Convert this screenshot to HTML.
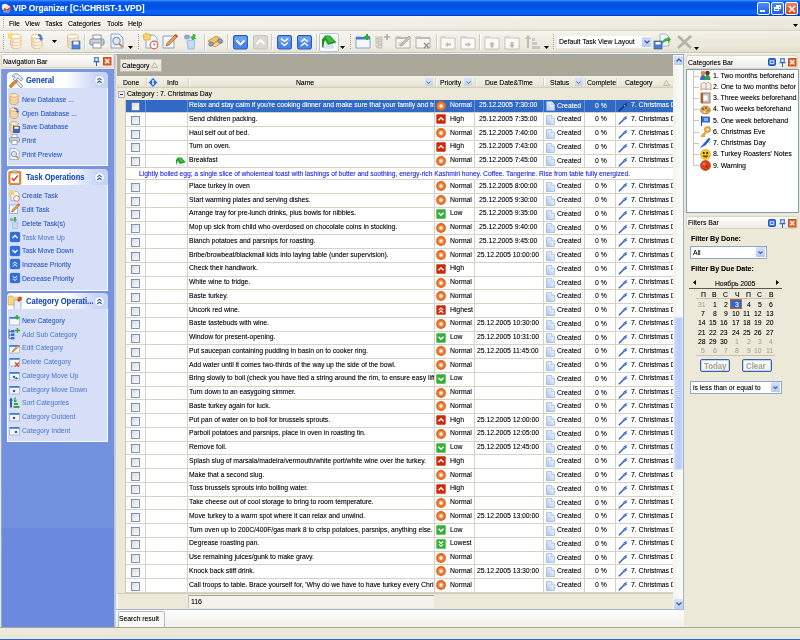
<!DOCTYPE html><html><head><meta charset="utf-8"><style>
*{margin:0;padding:0;box-sizing:border-box}
html,body{width:800px;height:640px;overflow:hidden;background:#ECE9D8;font-family:"Liberation Sans",sans-serif}
.b{position:absolute}
.t{position:absolute;white-space:nowrap;line-height:1;transform-origin:0 0}
svg{position:absolute;overflow:visible}
</style></head><body><div id="root" style="position:absolute;left:0;top:0;width:800px;height:640px;will-change:transform"><div class="b" style="left:0px;top:0px;width:800px;height:16px;background:linear-gradient(#4A96FF 0,#2A7AFF 1px,#0858F2 2px,#0352E4 4px,#0352E2 9px,#0862F6 10px,#0A64F8 14px,#0246D0 15px,#0038B8 16px)"></div>
<div class="t" style="left:13px;top:4.0px;font-size:9px;color:#fff;font-weight:bold;text-shadow:.3px 0 0 rgba(255,255,255,0.27999999999999997);transform:scaleX(0.93);">VIP Organizer [C:\CHRIST-1.VPD]</div>
<svg style="left:1px;top:3px" width="11" height="10" viewBox="0 0 11 10"><circle cx="4" cy="4" r="3.2" fill="#F4F0EA"/><circle cx="7" cy="5" r="2.6" fill="#E8E4DC"/><path d="M3 5.5l3 2 4-3" stroke="#E03A1A" stroke-width="1.6" fill="none"/><ellipse cx="5.5" cy="8.5" rx="3.5" ry="1.3" fill="#8A9AB8"/></svg>
<div class="b" style="left:757px;top:1.5px;width:13px;height:13px;background:linear-gradient(#4C8CFF,#1F5FE8);border:1px solid #fff;border-radius:2px"></div>
<div class="b" style="left:771px;top:1.5px;width:13px;height:13px;background:linear-gradient(#4C8CFF,#1F5FE8);border:1px solid #fff;border-radius:2px"></div>
<div class="b" style="left:785px;top:1.5px;width:13px;height:13px;background:linear-gradient(#E9845C,#D24A1E);border:1px solid #fff;border-radius:2px"></div>
<div class="b" style="left:760px;top:9.5px;width:5px;height:2px;background:#fff"></div>
<div class="b" style="left:776px;top:5px;width:5px;height:4px;border:1px solid #fff;border-top-width:2px"></div>
<div class="b" style="left:774px;top:7px;width:5px;height:4px;border:1px solid #fff;border-top-width:2px;background:#2A66EA"></div>
<svg style="left:788px;top:4.5px" width="8" height="8"><path d="M1 1L7 7M7 1L1 7" stroke="#fff" stroke-width="1.6"/></svg>
<div class="b" style="left:0px;top:16px;width:800px;height:15px;background:linear-gradient(rgba(255,255,255,.35),rgba(255,255,255,0) 40%,rgba(0,0,0,0) 80%,rgba(80,70,30,.06)),linear-gradient(90deg,#F3F2EC,#F1EFE5 50%,#ECE9DC);border-bottom:1px solid #D8D5C8"></div>
<div class="b" style="left:3px;top:19px;width:1px;height:1px;background:#A8A597"></div>
<div class="b" style="left:3px;top:21px;width:1px;height:1px;background:#A8A597"></div>
<div class="b" style="left:3px;top:23px;width:1px;height:1px;background:#A8A597"></div>
<div class="b" style="left:3px;top:25px;width:1px;height:1px;background:#A8A597"></div>
<div class="b" style="left:3px;top:27px;width:1px;height:1px;background:#A8A597"></div>
<div class="t" style="left:9px;top:19.8px;font-size:7.5px;color:#000;text-shadow:.4px 0 0 rgba(0,0,0,0.35);transform:scaleX(0.9);">File</div>
<div class="t" style="left:25px;top:19.8px;font-size:7.5px;color:#000;text-shadow:.4px 0 0 rgba(0,0,0,0.35);transform:scaleX(0.9);">View</div>
<div class="t" style="left:45px;top:19.8px;font-size:7.5px;color:#000;text-shadow:.4px 0 0 rgba(0,0,0,0.35);transform:scaleX(0.9);">Tasks</div>
<div class="t" style="left:68px;top:19.8px;font-size:7.5px;color:#000;text-shadow:.4px 0 0 rgba(0,0,0,0.35);transform:scaleX(0.9);">Categories</div>
<div class="t" style="left:107px;top:19.8px;font-size:7.5px;color:#000;text-shadow:.4px 0 0 rgba(0,0,0,0.35);transform:scaleX(0.9);">Tools</div>
<div class="t" style="left:128px;top:19.8px;font-size:7.5px;color:#000;text-shadow:.4px 0 0 rgba(0,0,0,0.35);transform:scaleX(0.9);">Help</div>
<svg style="left:793px;top:24px" width="5" height="3"><path d="M0 0H5L2.5 3Z" fill="#000"/></svg>
<div class="b" style="left:0px;top:31px;width:800px;height:22px;background:linear-gradient(rgba(255,255,255,.45),rgba(255,255,255,0) 45%,rgba(0,0,0,0) 70%,rgba(90,80,40,.07)),linear-gradient(90deg,#F1F0EA,#EFEDE4 50%,#EBE8D9);border-bottom:1px solid #C9C6B6"></div>
<div class="b" style="left:0px;top:53px;width:800px;height:1px;background:#F4F3EE"></div>
<div class="b" style="left:3px;top:34px;width:1px;height:1px;background:#A8A597"></div>
<div class="b" style="left:3px;top:36px;width:1px;height:1px;background:#A8A597"></div>
<div class="b" style="left:3px;top:38px;width:1px;height:1px;background:#A8A597"></div>
<div class="b" style="left:3px;top:40px;width:1px;height:1px;background:#A8A597"></div>
<div class="b" style="left:3px;top:42px;width:1px;height:1px;background:#A8A597"></div>
<div class="b" style="left:3px;top:44px;width:1px;height:1px;background:#A8A597"></div>
<div class="b" style="left:3px;top:46px;width:1px;height:1px;background:#A8A597"></div>
<div class="b" style="left:3px;top:48px;width:1px;height:1px;background:#A8A597"></div>
<svg style="left:8px;top:33px" width="15" height="17" viewBox="0 0 15 17"><path d="M2.5 3.5v9.5c0 1.5 2.3 2.6 5.2 2.6s5.3-1.1 5.3-2.6V3.5" fill="#F7F1E6" stroke="#F0A850" stroke-width=".9" stroke-dasharray="1.2 .6"/><path d="M2.8 4v9c0 1.2 1.5 2 3 2.3V5.5C4 5.2 2.8 4.6 2.8 4z" fill="#DCD8D0" opacity=".7"/><ellipse cx="7.75" cy="3.5" rx="5.2" ry="2.3" fill="#FFFCF4" stroke="#F0B060" stroke-width=".8"/><path d="M2.5 7c0 1.4 2.3 2.4 5.2 2.4S13 8.4 13 7M2.5 10.2c0 1.4 2.3 2.4 5.2 2.4s5.3-1 5.3-2.4" fill="none" stroke="#F2BE78" stroke-width=".7"/><path d="M0 1l2 2M3 0v3M0 4h3" stroke="#F9C700" stroke-width="1.3"/><circle cx="2" cy="3" r="2" fill="#FFE25A"/></svg>
<svg style="left:29px;top:33px" width="15" height="17" viewBox="0 0 15 17"><path d="M2.5 3.5v9.5c0 1.5 2.3 2.6 5.2 2.6s5.3-1.1 5.3-2.6V3.5" fill="#F7F1E6" stroke="#F0A850" stroke-width=".9" stroke-dasharray="1.2 .6"/><path d="M2.8 4v9c0 1.2 1.5 2 3 2.3V5.5C4 5.2 2.8 4.6 2.8 4z" fill="#DCD8D0" opacity=".7"/><ellipse cx="7.75" cy="3.5" rx="5.2" ry="2.3" fill="#FFFCF4" stroke="#F0B060" stroke-width=".8"/><path d="M2.5 7c0 1.4 2.3 2.4 5.2 2.4S13 8.4 13 7M2.5 10.2c0 1.4 2.3 2.4 5.2 2.4s5.3-1 5.3-2.4" fill="none" stroke="#F2BE78" stroke-width=".7"/><path d="M9 1c3 0 4 2 4 4l1.5 0-2.5 3-2.5-3h1.5c0-1-1-2-2-2z" fill="#3C7DE0"/></svg>
<svg style="left:52px;top:40px" width="5" height="3" viewBox="0 0 5 3"><path d="M0 0H5L2.5 3Z" fill="#000"/></svg>
<svg style="left:65px;top:33px" width="15" height="17" viewBox="0 0 15 17"><path d="M2.5 3.5v9.5c0 1.5 2.3 2.6 5.2 2.6s5.3-1.1 5.3-2.6V3.5" fill="#F7F1E6" stroke="#F0A850" stroke-width=".9" stroke-dasharray="1.2 .6"/><path d="M2.8 4v9c0 1.2 1.5 2 3 2.3V5.5C4 5.2 2.8 4.6 2.8 4z" fill="#DCD8D0" opacity=".7"/><ellipse cx="7.75" cy="3.5" rx="5.2" ry="2.3" fill="#FFFCF4" stroke="#F0B060" stroke-width=".8"/><path d="M2.5 7c0 1.4 2.3 2.4 5.2 2.4S13 8.4 13 7M2.5 10.2c0 1.4 2.3 2.4 5.2 2.4s5.3-1 5.3-2.4" fill="none" stroke="#F2BE78" stroke-width=".7"/><rect x="7" y="8" width="8" height="8" fill="#5A84D4" stroke="#2E5AA8" stroke-width=".6"/><rect x="8.5" y="8.5" width="5" height="3" fill="#fff"/></svg>
<div class="b" style="left:84px;top:34px;width:1px;height:16px;background:#CFCCBF;box-shadow:1px 0 0 #fff"></div>
<svg style="left:89px;top:34px" width="16" height="15" viewBox="0 0 16 15"><rect x="4" y="1" width="8" height="5" fill="#fff" stroke="#8A94A2"/><rect x="1" y="5" width="14" height="6" rx="1.5" fill="#C9D0DA" stroke="#7E8896"/><rect x="4" y="9" width="8" height="5" fill="#fff" stroke="#8A94A2"/><circle cx="12.5" cy="7" r=".8" fill="#3BB33B"/></svg>
<svg style="left:110px;top:33px" width="16" height="16" viewBox="0 0 16 16"><path d="M1 1h8l4 4v10H1z" fill="#F2F5FB" stroke="#8EA0BC"/><circle cx="6.5" cy="8" r="3.6" fill="#DCE8F8" stroke="#7F98BC" stroke-width="1.2"/><path d="M9 10.5l3.5 3.5" stroke="#D08A3A" stroke-width="2"/></svg>
<svg style="left:128px;top:46px" width="5" height="3" viewBox="0 0 5 3"><path d="M0 0H5L2.5 3Z" fill="#000"/></svg>
<div class="b" style="left:138px;top:34px;width:1px;height:1px;background:#A8A597"></div>
<div class="b" style="left:138px;top:36px;width:1px;height:1px;background:#A8A597"></div>
<div class="b" style="left:138px;top:38px;width:1px;height:1px;background:#A8A597"></div>
<div class="b" style="left:138px;top:40px;width:1px;height:1px;background:#A8A597"></div>
<div class="b" style="left:138px;top:42px;width:1px;height:1px;background:#A8A597"></div>
<div class="b" style="left:138px;top:44px;width:1px;height:1px;background:#A8A597"></div>
<div class="b" style="left:138px;top:46px;width:1px;height:1px;background:#A8A597"></div>
<div class="b" style="left:138px;top:48px;width:1px;height:1px;background:#A8A597"></div>
<svg style="left:143px;top:33px" width="16" height="17" viewBox="0 0 16 17"><path d="M3 2h8l3 3v10H3z" fill="#F3F6FB" stroke="#9AA7BC"/><path d="M0 2l3-2 5 2-1 5-6 0z" fill="#F6D36A" stroke="#D8A030" stroke-width=".6"/><circle cx="11" cy="12" r="3.8" fill="#fff" stroke="#D06A4A" stroke-width="1.2"/><path d="M11 10v2h1.5" stroke="#555" stroke-width=".7" fill="none"/></svg>
<svg style="left:162px;top:33px" width="16" height="16" viewBox="0 0 16 16"><path d="M1 3h11v12H1z" fill="#F3F6FB" stroke="#8EA0BC"/><path d="M4 13l1-3 8-8 2 2-8 8z" fill="#F0A040" stroke="#7A5A3A" stroke-width=".6"/><path d="M12 2l2-1 2 2-1 2z" fill="#E04A2A"/></svg>
<svg style="left:183px;top:33px" width="17" height="17" viewBox="0 0 17 17"><ellipse cx="4" cy="4" rx="3" ry="2.5" fill="#8FA8D8"/><path d="M9 1v3l-2 0 3.5 3.5L14 4h-2V1z" fill="#48B048" transform="rotate(20 10 4)"/><path d="M4 8c0-1 8-1 8 0l-1 8H5z" fill="#C6DAF6" stroke="#8AB0E6" stroke-width=".8"/></svg>
<div class="b" style="left:204px;top:34px;width:1px;height:16px;background:#CFCCBF;box-shadow:1px 0 0 #fff"></div>
<svg style="left:207px;top:35px" width="17" height="13" viewBox="0 0 17 13"><path d="M1 6l8-5 4 2-7 6z" fill="#F2C670" stroke="#C8882C" stroke-width=".8"/><path d="M5 10l9-6 2 3-8 5z" fill="#F6D890" stroke="#C8882C" stroke-width=".8"/><circle cx="4" cy="9" r="2.3" fill="#8E9EC0" stroke="#5A6A8A" stroke-width=".6"/><circle cx="13" cy="6" r="2.3" fill="#8E9EC0" stroke="#5A6A8A" stroke-width=".6"/></svg>
<div class="b" style="left:227px;top:34px;width:1px;height:16px;background:#CFCCBF;box-shadow:1px 0 0 #fff"></div>
<svg style="left:232.5px;top:34.5px" width="15" height="15" viewBox="0 0 15 15"><rect x=".5" y=".5" width="14" height="13.5" rx="1.5" fill="#4A86E8" stroke="#2A5CB8"/><rect x="1.5" y="1.5" width="12" height="5" rx="1" fill="#8BB6F6" opacity=".6"/><path d="M3.5 5.5l4 4 4-4" stroke="#fff" stroke-width="1.8" fill="none"/></svg>
<svg style="left:252.5px;top:34.5px" width="15" height="15" viewBox="0 0 15 15"><rect x=".5" y=".5" width="14" height="13.5" rx="1.5" fill="#D9D8D2" stroke="#C4C3BC"/><path d="M3.5 9l4-4 4 4" stroke="#fff" stroke-width="1.8" fill="none"/></svg>
<div class="b" style="left:271px;top:34px;width:1px;height:16px;background:#CFCCBF;box-shadow:1px 0 0 #fff"></div>
<svg style="left:276.5px;top:34.5px" width="15" height="15" viewBox="0 0 15 15"><rect x=".5" y=".5" width="14" height="13.5" rx="1.5" fill="#4A86E8" stroke="#2A5CB8"/><rect x="1.5" y="1.5" width="12" height="5" rx="1" fill="#8BB6F6" opacity=".6"/><path d="M4 3.5l3.5 3 3.5-3M4 7.5l3.5 3 3.5-3" stroke="#fff" stroke-width="1.5" fill="none"/></svg>
<svg style="left:296.5px;top:34.5px" width="15" height="15" viewBox="0 0 15 15"><rect x=".5" y=".5" width="14" height="13.5" rx="1.5" fill="#4A86E8" stroke="#2A5CB8"/><rect x="1.5" y="1.5" width="12" height="5" rx="1" fill="#8BB6F6" opacity=".6"/><path d="M4 7l3.5-3 3.5 3M4 11l3.5-3 3.5 3" stroke="#fff" stroke-width="1.5" fill="none"/></svg>
<div class="b" style="left:316px;top:34px;width:1px;height:16px;background:#CFCCBF;box-shadow:1px 0 0 #fff"></div>
<div class="b" style="left:318.5px;top:32.5px;width:20px;height:19px;background:#FBFBF9;border:1px solid #B9C6DE;border-radius:2px"></div>
<svg style="left:321px;top:34px" width="17" height="16" viewBox="0 0 17 16"><path d="M3 6h8l1 8H3z" fill="#F4F7FC" stroke="#B8C8E4" stroke-width=".7"/><path d="M5 12h6M5 10h5" stroke="#A8BEE8" stroke-width=".8"/><path d="M1.5 13.5V5L4 1.5h5l6.5 7-2.5.7-6 1.6L4 6z" fill="#1E9A1E"/><path d="M4.5 2.5h4l4.5 5-5 1.5z" fill="#3CC03C"/><path d="M1.8 13.5V5" stroke="#0E7A0E" stroke-width="1.2"/></svg>
<svg style="left:340px;top:46px" width="5" height="3" viewBox="0 0 5 3"><path d="M0 0H5L2.5 3Z" fill="#000"/></svg>
<div class="b" style="left:350px;top:34px;width:1px;height:1px;background:#A8A597"></div>
<div class="b" style="left:350px;top:36px;width:1px;height:1px;background:#A8A597"></div>
<div class="b" style="left:350px;top:38px;width:1px;height:1px;background:#A8A597"></div>
<div class="b" style="left:350px;top:40px;width:1px;height:1px;background:#A8A597"></div>
<div class="b" style="left:350px;top:42px;width:1px;height:1px;background:#A8A597"></div>
<div class="b" style="left:350px;top:44px;width:1px;height:1px;background:#A8A597"></div>
<div class="b" style="left:350px;top:46px;width:1px;height:1px;background:#A8A597"></div>
<div class="b" style="left:350px;top:48px;width:1px;height:1px;background:#A8A597"></div>
<svg style="left:355px;top:34px" width="16" height="15" viewBox="0 0 16 15"><path d="M1 3h5l1 1h8v10H1z" fill="#F4F7FC" stroke="#7A92B8" stroke-width=".8"/><rect x="1" y="3" width="14" height="2.5" fill="#3D7DDA"/><path d="M12 0v6M9 3h6" stroke="#2FAA2F" stroke-width="2"/></svg>
<svg style="left:375px;top:34px" width="16" height="16" viewBox="0 0 16 16"><rect x="3" y="3" width="4" height="3" fill="#E0DED6" stroke="#B0AEA6" stroke-width=".7"/><rect x="3" y="7" width="4" height="3" fill="#E0DED6" stroke="#B0AEA6" stroke-width=".7"/><rect x="3" y="11" width="4" height="3" fill="#E0DED6" stroke="#B0AEA6" stroke-width=".7"/><path d="M1 2v11h2M1 8h2M1 4.5h2" stroke="#B0AEA6" stroke-width=".7" fill="none"/><path d="M12 0v6M9 3h6" stroke="#AFADA5" stroke-width="1.6"/></svg>
<svg style="left:395px;top:34px" width="16" height="16" viewBox="0 0 16 16"><path d="M1 3h5l1 1h8v10H1z" fill="#F6F5F1" stroke="#A3A199" stroke-width=".8"/><rect x="1" y="3" width="14" height="2" fill="#BEBCB4"/><path d="M5 12l1-2 8-8 1.5 1.5-8 8z" fill="#C8C6BE" stroke="#8E8C84" stroke-width=".6"/><path d="M3 9h6M3 11h4" stroke="#A3A199" stroke-width=".6"/></svg>
<svg style="left:415px;top:34px" width="16" height="16" viewBox="0 0 16 16"><path d="M1 3h5l1 1h8v10H1z" fill="#F6F5F1" stroke="#A3A199" stroke-width=".8"/><rect x="1" y="3" width="14" height="2" fill="#BEBCB4"/><path d="M9 9l5 5M14 9l-5 5" stroke="#8E8C84" stroke-width="1.3"/></svg>
<div class="b" style="left:436px;top:34px;width:1px;height:16px;background:#CFCCBF;box-shadow:1px 0 0 #fff"></div>
<svg style="left:440px;top:35px" width="16" height="15" viewBox="0 0 16 15"><path d="M1 2h5l1 1h8v11H1z" fill="#FAFAF8" stroke="#B7B5AD" stroke-width=".8"/><rect x="1" y="2" width="6" height="1.5" fill="#D4D2CA"/><path d="M5 9.5l3-2.5v1.5h3v2H8v1.5z" fill="#BDBBB3"/></svg>
<svg style="left:460px;top:35px" width="16" height="15" viewBox="0 0 16 15"><path d="M1 2h5l1 1h8v11H1z" fill="#FAFAF8" stroke="#B7B5AD" stroke-width=".8"/><rect x="1" y="2" width="6" height="1.5" fill="#D4D2CA"/><path d="M11 9.5l-3-2.5v1.5H5v2h3v1.5z" fill="#BDBBB3"/></svg>
<div class="b" style="left:479px;top:34px;width:1px;height:16px;background:#CFCCBF;box-shadow:1px 0 0 #fff"></div>
<svg style="left:484px;top:35px" width="16" height="15" viewBox="0 0 16 15"><path d="M1 2h5l1 1h8v11H1z" fill="#FAFAF8" stroke="#B7B5AD" stroke-width=".8"/><rect x="1" y="2" width="6" height="1.5" fill="#D4D2CA"/><path d="M8 6.5l3 3H9.5v3h-3v-3H5z" fill="#BDBBB3"/></svg>
<svg style="left:504px;top:35px" width="16" height="15" viewBox="0 0 16 15"><path d="M1 2h5l1 1h8v11H1z" fill="#FAFAF8" stroke="#B7B5AD" stroke-width=".8"/><rect x="1" y="2" width="6" height="1.5" fill="#D4D2CA"/><path d="M8 13l3-3H9.5V7h-3v3H5z" fill="#BDBBB3"/></svg>
<svg style="left:525px;top:34px" width="16" height="16" viewBox="0 0 16 16"><path d="M3 1l3 4H4v9H2V5H0z" fill="#BDBBB3"/><rect x="7" y="4" width="3" height="3" fill="#C9C7BF"/><rect x="7" y="8" width="5" height="3" fill="#C9C7BF"/><rect x="7" y="12" width="8" height="3" fill="#C9C7BF"/></svg>
<svg style="left:544px;top:46px" width="5" height="3" viewBox="0 0 5 3"><path d="M0 0H5L2.5 3Z" fill="#000"/></svg>
<div class="b" style="left:553px;top:34px;width:1px;height:1px;background:#A8A597"></div>
<div class="b" style="left:553px;top:36px;width:1px;height:1px;background:#A8A597"></div>
<div class="b" style="left:553px;top:38px;width:1px;height:1px;background:#A8A597"></div>
<div class="b" style="left:553px;top:40px;width:1px;height:1px;background:#A8A597"></div>
<div class="b" style="left:553px;top:42px;width:1px;height:1px;background:#A8A597"></div>
<div class="b" style="left:553px;top:44px;width:1px;height:1px;background:#A8A597"></div>
<div class="b" style="left:553px;top:46px;width:1px;height:1px;background:#A8A597"></div>
<div class="b" style="left:553px;top:48px;width:1px;height:1px;background:#A8A597"></div>
<div class="b" style="left:557px;top:36px;width:94px;height:11.5px;background:#fff"></div>
<div class="t" style="left:558.5px;top:38.2px;font-size:7.5px;color:#000;text-shadow:.4px 0 0 rgba(0,0,0,0.35);transform:scaleX(0.9);">Default Task View Layout</div>
<div class="b" style="left:642px;top:36.5px;width:8.5px;height:10.5px;background:linear-gradient(#CCDAFB,#B8CCF6);border-radius:1px"></div>
<svg style="left:643.5px;top:40px" width="6" height="4" viewBox="0 0 6 4"><path d="M.6 .6L3 3 5.4 .6" stroke="#3A4A70" stroke-width="1.2" fill="none"/></svg>
<svg style="left:653px;top:33px" width="18" height="17" viewBox="0 0 18 17"><path d="M7 1h6l3 3v9H7z" fill="#F2F5FB" stroke="#9AA7BC" stroke-width=".8"/><path d="M9 11c0-4 3-6 6-6v-2l3 3.5-3 3.5V8c-2 0-4 1-6 3z" fill="#40B040"/><rect x="1" y="8" width="8" height="8" fill="#4E7ACC" stroke="#2C4E94" stroke-width=".6"/><rect x="2.5" y="9" width="5" height="2.5" fill="#fff"/></svg>
<svg style="left:676px;top:34px" width="17" height="16" viewBox="0 0 17 16"><path d="M2 2l13 12M15 2L2 14" stroke="#B4B2AA" stroke-width="2.6"/></svg>
<svg style="left:694px;top:47px" width="5" height="3" viewBox="0 0 5 3"><path d="M0 0H5L2.5 3Z" fill="#000"/></svg>
<div class="b" style="left:1px;top:54px;width:112.5px;height:14px;background:linear-gradient(#FDFDFB,#F4F3EE 60%,#ECEAE1);border:1px solid #D9D6C9;border-radius:3px"></div>
<div class="t" style="left:3px;top:58px;font-size:7.5px;color:#000;text-shadow:.4px 0 0 rgba(0,0,0,0.35);transform:scaleX(0.9);">Navigation Bar</div>
<svg style="left:93.0px;top:56.5px" width="7" height="9" viewBox="0 0 7 9"><path d="M1 .8h5M1.8 .8v3.6h3.4V.8M.3 4.8h6.4M3.5 4.8V9" stroke="#2C5FBE" stroke-width="1" fill="none"/></svg>
<svg style="left:103.0px;top:56.5px" width="8.5" height="8.5" viewBox="0 0 8.5 8.5"><rect x=".5" y=".5" width="7.5" height="7.5" fill="#E66A30" stroke="#C8501C"/><path d="M2.3 2.3l3.9 3.9M6.2 2.3l-3.9 3.9" stroke="#fff" stroke-width="1.3"/></svg>
<div class="b" style="left:1px;top:69px;width:113px;height:557.5px;background:linear-gradient(#7A96E0 0,#7694E0 150px,#7191DE 459px,#6A8ADF 459px,#6889DE 100%);border-left:1px solid #8CA6E6"></div>
<div class="b" style="left:7px;top:71.5px;width:101px;height:16px;background:linear-gradient(90deg,#FFFFFF 0,#FFFFFF 58%,#E2E9FA 74%,#CAD6F7 88%,#C6D3F7 100%);border-radius:4px 4px 0 0"></div>
<div class="t" style="left:25.5px;top:76.7px;font-size:8.2px;color:#1A4DB8;font-weight:bold;text-shadow:.3px 0 0 rgba(26,77,184,0.27999999999999997);transform:scaleX(0.92);">General</div>
<svg style="left:94px;top:74.5px" width="11" height="11" viewBox="0 0 11 11"><circle cx="5.5" cy="5.5" r="4.8" fill="#fff" stroke="#B8C6EA" stroke-width=".8"/><path d="M3.3 5.2l2.2-2 2.2 2M3.3 8l2.2-2 2.2 2" stroke="#2A54B4" stroke-width="1.1" fill="none"/></svg>
<svg style="left:8px;top:72.5px" width="16" height="15" viewBox="0 0 16 15"><path d="M1 13l7-7 2 2-7 7z" fill="#E8862A" stroke="#8A5020" stroke-width=".5"/><path d="M4 3c2-3 6-3 8 0l3 3-2 2-3-3-3 3-2-2 2-2z" fill="#E2E8F2" stroke="#6A7A92" stroke-width=".7"/><path d="M10 8l5 5-2 2-5-5z" fill="#DDE4EF" stroke="#6A7A92" stroke-width=".6"/></svg>
<div class="b" style="left:7px;top:87.5px;width:101px;height:78.0px;background:#D6DFF7;border:1px solid #fff;border-top:0"></div>
<div class="t" style="left:22px;top:96.0px;font-size:7.5px;color:#2F5CC4;text-shadow:.4px 0 0 rgba(47,92,196,0.35);transform:scaleX(0.9);">New Database ...</div>
<svg style="left:9px;top:93.2px" width="10" height="12" viewBox="0 0 10 12"><path d="M1 2.5v7c0 1 1.8 2 4 2s4-1 4-2v-7" fill="#F3E2C0" stroke="#E0943A" stroke-width=".8"/><ellipse cx="5" cy="2.5" rx="4" ry="1.8" fill="#FFF4DC" stroke="#E0943A" stroke-width=".8"/><path d="M1 5.5c0 1 1.8 1.7 4 1.7s4-.7 4-1.7M1 8c0 1 1.8 1.7 4 1.7S9 9 9 8" fill="none" stroke="#E8B060" stroke-width=".6"/></svg>
<div class="t" style="left:22px;top:109.6px;font-size:7.5px;color:#2F5CC4;text-shadow:.4px 0 0 rgba(47,92,196,0.35);transform:scaleX(0.9);">Open Database ...</div>
<svg style="left:9px;top:106.8px" width="10" height="12" viewBox="0 0 10 12"><path d="M1 2.5v7c0 1 1.8 2 4 2s4-1 4-2v-7" fill="#F3E2C0" stroke="#E0943A" stroke-width=".8"/><ellipse cx="5" cy="2.5" rx="4" ry="1.8" fill="#FFF4DC" stroke="#E0943A" stroke-width=".8"/><path d="M1 5.5c0 1 1.8 1.7 4 1.7s4-.7 4-1.7M1 8c0 1 1.8 1.7 4 1.7S9 9 9 8" fill="none" stroke="#E8B060" stroke-width=".6"/></svg>
<svg style="left:14px;top:106.8px" width="6" height="6" viewBox="0 0 6 6"><path d="M0 1c3 0 4 1 4 3h1.5L3.5 6 1.5 4H3C3 3 2 2 0 2z" fill="#2D6FD8"/></svg>
<div class="t" style="left:22px;top:123.3px;font-size:7.5px;color:#2F5CC4;text-shadow:.4px 0 0 rgba(47,92,196,0.35);transform:scaleX(0.9);">Save Database</div>
<svg style="left:9px;top:120.5px" width="10" height="12" viewBox="0 0 10 12"><path d="M1 2.5v7c0 1 1.8 2 4 2s4-1 4-2v-7" fill="#F3E2C0" stroke="#E0943A" stroke-width=".8"/><ellipse cx="5" cy="2.5" rx="4" ry="1.8" fill="#FFF4DC" stroke="#E0943A" stroke-width=".8"/><path d="M1 5.5c0 1 1.8 1.7 4 1.7s4-.7 4-1.7M1 8c0 1 1.8 1.7 4 1.7S9 9 9 8" fill="none" stroke="#E8B060" stroke-width=".6"/></svg>
<svg style="left:13px;top:125.5px" width="7" height="7" viewBox="0 0 7 7"><rect x=".3" y=".3" width="6.4" height="6.4" fill="#3E68B8" stroke="#1D3D80" stroke-width=".5"/><rect x="1.5" y=".8" width="4" height="2" fill="#fff"/></svg>
<div class="t" style="left:22px;top:136.9px;font-size:7.5px;color:#2F5CC4;text-shadow:.4px 0 0 rgba(47,92,196,0.35);transform:scaleX(0.9);">Print</div>
<svg style="left:9px;top:134.1px" width="11" height="11" viewBox="0 0 11 11"><rect x="3" y=".5" width="5" height="3.5" fill="#fff" stroke="#8A94A2" stroke-width=".7"/><rect x=".5" y="3.5" width="10" height="4.5" rx="1" fill="#C6CDD8" stroke="#7E8896" stroke-width=".7"/><rect x="3" y="6.5" width="5" height="4" fill="#fff" stroke="#8A94A2" stroke-width=".7"/></svg>
<div class="t" style="left:22px;top:150.60000000000002px;font-size:7.5px;color:#2F5CC4;text-shadow:.4px 0 0 rgba(47,92,196,0.35);transform:scaleX(0.9);">Print Preview</div>
<svg style="left:9px;top:147.8px" width="11" height="12" viewBox="0 0 11 12"><path d="M1 .5h6l3 3v8H1z" fill="#F2F5FB" stroke="#8EA0BC" stroke-width=".7"/><circle cx="5" cy="6" r="2.6" fill="#DCE8F8" stroke="#7F98BC" stroke-width=".9"/><path d="M6.8 7.8l2.7 2.7" stroke="#D08A3A" stroke-width="1.5"/></svg>
<div class="b" style="left:7px;top:168.5px;width:101px;height:16px;background:linear-gradient(90deg,#FFFFFF 0,#FFFFFF 58%,#E2E9FA 74%,#CAD6F7 88%,#C6D3F7 100%);border-radius:4px 4px 0 0"></div>
<div class="t" style="left:25.5px;top:173.7px;font-size:8.2px;color:#1A4DB8;font-weight:bold;text-shadow:.3px 0 0 rgba(26,77,184,0.27999999999999997);transform:scaleX(0.92);">Task Operations</div>
<svg style="left:94px;top:171.5px" width="11" height="11" viewBox="0 0 11 11"><circle cx="5.5" cy="5.5" r="4.8" fill="#fff" stroke="#B8C6EA" stroke-width=".8"/><path d="M3.3 5.2l2.2-2 2.2 2M3.3 8l2.2-2 2.2 2" stroke="#2A54B4" stroke-width="1.1" fill="none"/></svg>
<svg style="left:8px;top:169.5px" width="14" height="15" viewBox="0 0 14 15"><rect x=".8" y="1.5" width="12" height="13" rx="1" fill="#F08A2A" stroke="#B05A10" stroke-width=".6"/><rect x="2.5" y="3.5" width="8.5" height="9.5" fill="#fff"/><rect x="4.5" y=".3" width="4.5" height="2.4" rx=".6" fill="#C7C1B0" stroke="#8A8478" stroke-width=".4"/><path d="M3.8 8l2 2.5 4-5" stroke="#D8341A" stroke-width="1.3" fill="none"/></svg>
<div class="b" style="left:7px;top:184.5px;width:101px;height:106.30000000000001px;background:#D6DFF7;border:1px solid #fff;border-top:0"></div>
<div class="t" style="left:22px;top:192.4px;font-size:7.5px;color:#2F5CC4;text-shadow:.4px 0 0 rgba(47,92,196,0.35);transform:scaleX(0.9);">Create Task</div>
<svg style="left:9px;top:189.6px" width="11" height="12" viewBox="0 0 11 12"><path d="M2 1.5h6l2 2v7H2z" fill="#F3F6FB" stroke="#9AA7BC" stroke-width=".7"/><path d="M0 1.5l2-1.5 4 1.5-1 3.5H0z" fill="#F6D36A"/><circle cx="7.5" cy="8.5" r="2.8" fill="#fff" stroke="#D06A4A" stroke-width=".9"/></svg>
<div class="t" style="left:22px;top:206.10000000000002px;font-size:7.5px;color:#2F5CC4;text-shadow:.4px 0 0 rgba(47,92,196,0.35);transform:scaleX(0.9);">Edit Task</div>
<svg style="left:9px;top:203.3px" width="11" height="11" viewBox="0 0 11 11"><path d="M.5 2h8v8.5h-8z" fill="#F3F6FB" stroke="#8EA0BC" stroke-width=".7"/><path d="M2.5 9l.8-2.2 5.5-5.5 1.4 1.4-5.5 5.5z" fill="#F0A040" stroke="#7A5A3A" stroke-width=".5"/><path d="M8.5 1.3l1.2-1 1.2 1.2-1 1.2z" fill="#E04A2A"/></svg>
<div class="t" style="left:22px;top:219.8px;font-size:7.5px;color:#2F5CC4;text-shadow:.4px 0 0 rgba(47,92,196,0.35);transform:scaleX(0.9);">Delete Task(s)</div>
<svg style="left:9px;top:217.0px" width="12" height="12" viewBox="0 0 12 12"><ellipse cx="2.5" cy="2.5" rx="2" ry="1.8" fill="#8FA8D8"/><path d="M5 0v2.5h-1.5l2.5 2.5 2.5-2.5H7V0z" fill="#48B048"/><path d="M3 5.5c0-.7 6-.7 6 0l-.8 6H3.8z" fill="#C6DAF6" stroke="#8AB0E6" stroke-width=".6"/></svg>
<div class="t" style="left:22px;top:233.5px;font-size:7.5px;color:#5F83D2;text-shadow:.4px 0 0 rgba(95,131,210,0.35);transform:scaleX(0.9);">Task Move Up</div>
<svg style="left:9.5px;top:231.7px" width="10" height="10" viewBox="0 0 10 10"><rect x=".3" y=".3" width="9.4" height="9.4" rx="1" fill="#2C6FE0" stroke="#1B4FB4" stroke-width=".6"/><path d="M2.5 6l2.5-2.5L7.5 6" stroke="#fff" stroke-width="1.4" fill="none"/></svg>
<div class="t" style="left:22px;top:247.3px;font-size:7.5px;color:#2F5CC4;text-shadow:.4px 0 0 rgba(47,92,196,0.35);transform:scaleX(0.9);">Task Move Down</div>
<svg style="left:9.5px;top:245.5px" width="10" height="10" viewBox="0 0 10 10"><rect x=".3" y=".3" width="9.4" height="9.4" rx="1" fill="#2C6FE0" stroke="#1B4FB4" stroke-width=".6"/><path d="M2.5 4l2.5 2.5L7.5 4" stroke="#fff" stroke-width="1.4" fill="none"/></svg>
<div class="t" style="left:22px;top:261.1px;font-size:7.5px;color:#2F5CC4;text-shadow:.4px 0 0 rgba(47,92,196,0.35);transform:scaleX(0.9);">Increase Priority</div>
<svg style="left:9.5px;top:259.3px" width="10" height="10" viewBox="0 0 10 10"><rect x=".3" y=".3" width="9.4" height="9.4" rx="1" fill="#2C6FE0" stroke="#1B4FB4" stroke-width=".6"/><path d="M2.8 5l2.2-2 2.2 2M2.8 7.5l2.2-2 2.2 2" stroke="#fff" stroke-width="1" fill="none"/></svg>
<div class="t" style="left:22px;top:274.8px;font-size:7.5px;color:#2F5CC4;text-shadow:.4px 0 0 rgba(47,92,196,0.35);transform:scaleX(0.9);">Decrease Priority</div>
<svg style="left:9.5px;top:273.0px" width="10" height="10" viewBox="0 0 10 10"><rect x=".3" y=".3" width="9.4" height="9.4" rx="1" fill="#2C6FE0" stroke="#1B4FB4" stroke-width=".6"/><path d="M2.8 3l2.2 2 2.2-2M2.8 5.5l2.2 2 2.2-2" stroke="#fff" stroke-width="1" fill="none"/></svg>
<div class="b" style="left:7px;top:293px;width:101px;height:16px;background:linear-gradient(90deg,#FFFFFF 0,#FFFFFF 58%,#E2E9FA 74%,#CAD6F7 88%,#C6D3F7 100%);border-radius:4px 4px 0 0"></div>
<div class="t" style="left:25.5px;top:298.2px;font-size:8.2px;color:#1A4DB8;font-weight:bold;text-shadow:.3px 0 0 rgba(26,77,184,0.27999999999999997);transform:scaleX(0.92);">Category Operati...</div>
<svg style="left:94px;top:296px" width="11" height="11" viewBox="0 0 11 11"><circle cx="5.5" cy="5.5" r="4.8" fill="#fff" stroke="#B8C6EA" stroke-width=".8"/><path d="M3.3 5.2l2.2-2 2.2 2M3.3 8l2.2-2 2.2 2" stroke="#2A54B4" stroke-width="1.1" fill="none"/></svg>
<svg style="left:8px;top:294px" width="16" height="17" viewBox="0 0 16 17"><path d="M0 2h5l1 1.5h6V11H0z" fill="#F6D680" stroke="#D0A040" stroke-width=".6"/><rect x="6" y="6" width="7" height="10" fill="#E6ECF6" stroke="#7A8AA8" stroke-width=".6"/><path d="M9 6l3-3 2 2-3 3z" fill="#D8341A"/><circle cx="12" cy="4.5" r="2" fill="#E04A2A"/></svg>
<div class="b" style="left:7px;top:309px;width:101px;height:133px;background:#D6DFF7;border:1px solid #fff;border-top:0"></div>
<div class="t" style="left:22px;top:317.0px;font-size:7.5px;color:#2F5CC4;text-shadow:.4px 0 0 rgba(47,92,196,0.35);transform:scaleX(0.9);">New Category</div>
<svg style="left:9px;top:315.2px" width="11" height="11" viewBox="0 0 11 11"><path d="M.5 2.5h10v7.5H.5z" fill="#F4F7FC" stroke="#8AA0C0" stroke-width=".6"/><rect x=".5" y="2" width="10" height="1.8" fill="#3D7DDA"/><path d="M8 0v4.5M5.8 2.2h4.5" stroke="#2FAA2F" stroke-width="1.6"/></svg>
<div class="t" style="left:22px;top:330.7px;font-size:7.5px;color:#5F83D2;text-shadow:.4px 0 0 rgba(95,131,210,0.35);transform:scaleX(0.9);">Add Sub Category</div>
<svg style="left:9px;top:327.9px" width="11" height="12" viewBox="0 0 11 12"><rect x="2" y="2" width="3.5" height="2.5" fill="#3D6DC8"/><rect x="2" y="5.5" width="3.5" height="2.5" fill="#3D6DC8"/><rect x="2" y="9" width="3.5" height="2.5" fill="#3D6DC8"/><path d="M0 1v9.5h2M0 7h2M0 3.5h2" stroke="#2A4A90" stroke-width=".7" fill="none"/><path d="M8.5 0v5M6 2.5h5" stroke="#2FAA2F" stroke-width="1.5"/></svg>
<div class="t" style="left:22px;top:344.40000000000003px;font-size:7.5px;color:#5F83D2;text-shadow:.4px 0 0 rgba(95,131,210,0.35);transform:scaleX(0.9);">Edit Category</div>
<svg style="left:9px;top:342.6px" width="11" height="11" viewBox="0 0 11 11"><path d="M.5 2.5h10v7.5H.5z" fill="#F4F7FC" stroke="#8AA0C0" stroke-width=".6"/><rect x=".5" y="2" width="10" height="1.8" fill="#3D7DDA"/><path d="M3 9l1-2 5-5 1.2 1.2-5 5z" fill="#F0A040" stroke="#7A5A3A" stroke-width=".4"/></svg>
<div class="t" style="left:22px;top:358.1px;font-size:7.5px;color:#5F83D2;text-shadow:.4px 0 0 rgba(95,131,210,0.35);transform:scaleX(0.9);">Delete Category</div>
<svg style="left:9px;top:356.3px" width="11" height="11" viewBox="0 0 11 11"><path d="M.5 2.5h10v7.5H.5z" fill="#F4F7FC" stroke="#8AA0C0" stroke-width=".6"/><rect x=".5" y="2" width="10" height="1.8" fill="#3D7DDA"/><path d="M6 6.5l4 4M10 6.5l-4 4" stroke="#E04A10" stroke-width="1.4"/></svg>
<div class="t" style="left:22px;top:371.90000000000003px;font-size:7.5px;color:#5F83D2;text-shadow:.4px 0 0 rgba(95,131,210,0.35);transform:scaleX(0.9);">Category Move Up</div>
<svg style="left:9px;top:370.1px" width="11" height="11" viewBox="0 0 11 11"><path d="M.5 2.5h10v7.5H.5z" fill="#F4F7FC" stroke="#8AA0C0" stroke-width=".6"/><rect x=".5" y="2" width="10" height="1.8" fill="#3D7DDA"/><path d="M5.5 9l2-2 2 2z" fill="#2C5FBE"/><circle cx="5" cy="7" r="1.3" fill="#2C5FBE"/></svg>
<div class="t" style="left:22px;top:385.6px;font-size:7.5px;color:#5F83D2;text-shadow:.4px 0 0 rgba(95,131,210,0.35);transform:scaleX(0.9);">Category Move Down</div>
<svg style="left:9px;top:383.8px" width="11" height="11" viewBox="0 0 11 11"><path d="M.5 2.5h10v7.5H.5z" fill="#F4F7FC" stroke="#8AA0C0" stroke-width=".6"/><rect x=".5" y="2" width="10" height="1.8" fill="#3D7DDA"/><circle cx="5" cy="7" r="1.3" fill="#2C5FBE"/></svg>
<div class="t" style="left:22px;top:399.3px;font-size:7.5px;color:#5F83D2;text-shadow:.4px 0 0 rgba(95,131,210,0.35);transform:scaleX(0.9);">Sort Categories</div>
<svg style="left:9px;top:396.5px" width="11" height="11" viewBox="0 0 11 11"><path d="M2 .5l2 3H3v7H1v-7H0z" fill="#2C5FBE"/><path d="M5 3h2.5v2H5zM5 6h4v2H5zM4.5 9h6v2h-6z" fill="#38A838"/><path d="M6 0l1.5 2.5h-3z" fill="#38A838"/></svg>
<div class="t" style="left:22px;top:413.1px;font-size:7.5px;color:#5F83D2;text-shadow:.4px 0 0 rgba(95,131,210,0.35);transform:scaleX(0.9);">Category Outdent</div>
<svg style="left:9px;top:411.3px" width="11" height="11" viewBox="0 0 11 11"><path d="M.5 2.5h10v7.5H.5z" fill="#F4F7FC" stroke="#8AA0C0" stroke-width=".6"/><rect x=".5" y="2" width="10" height="1.8" fill="#3D7DDA"/><circle cx="5" cy="7" r="1.3" fill="#2C5FBE"/></svg>
<div class="t" style="left:22px;top:426.8px;font-size:7.5px;color:#5F83D2;text-shadow:.4px 0 0 rgba(95,131,210,0.35);transform:scaleX(0.9);">Category Indent</div>
<svg style="left:9px;top:425.0px" width="11" height="11" viewBox="0 0 11 11"><path d="M.5 2.5h10v7.5H.5z" fill="#F4F7FC" stroke="#8AA0C0" stroke-width=".6"/><rect x=".5" y="2" width="10" height="1.8" fill="#3D7DDA"/><circle cx="7" cy="7" r="1.3" fill="#2C5FBE"/></svg>
<div class="b" style="left:114px;top:54px;width:3px;height:573px;background:linear-gradient(90deg,#B4BFD4,#C9D0DC 50%,#E2E4E6)"></div>
<div class="b" style="left:115.5px;top:54px;width:569px;height:556px;border:1px solid #97A6C6;border-left:0;background:#ECE9D8"></div>
<div class="b" style="left:117px;top:55px;width:556.5px;height:21px;background:#ACA899"></div>
<div class="b" style="left:120px;top:59px;width:41.5px;height:12.5px;background:linear-gradient(#F3F2EA,#E6E3D6);border:1px solid #D2CFC2;border-right-color:#BEBBAE;border-bottom-color:#BEBBAE"></div>
<div class="t" style="left:122px;top:61.8px;font-size:7.5px;color:#000;text-shadow:.4px 0 0 rgba(0,0,0,0.35);transform:scaleX(0.9);">Category</div>
<svg style="left:151px;top:62px" width="7" height="6" viewBox="0 0 7 6"><path d="M3.5 .5L6.5 5.5H.5z" fill="none" stroke="#B8B2A0" stroke-width=".9"/></svg>
<div class="b" style="left:116.5px;top:76px;width:557px;height:12px;background:linear-gradient(#F2F1E8,#EBEADB 70%,#E2DFCF);border-bottom:1px solid #D2CEBE"></div>
<div class="t" style="left:123px;top:78.8px;font-size:7.5px;color:#000;text-shadow:.4px 0 0 rgba(0,0,0,0.35);transform:scaleX(0.9);">Done</div>
<div class="b" style="left:145.5px;top:78px;width:1px;height:8px;background:#D6D2C3;box-shadow:1px 0 0 #fff"></div>
<svg style="left:148px;top:76.5px" width="10" height="11" viewBox="0 0 10 11"><path d="M5 .5l4.5 5-4.5 5-4.5-5z" fill="#2D68D8" stroke="#CFE0FF" stroke-width=".8"/><rect x="4.3" y="3" width="1.4" height="5" fill="#fff"/></svg>
<div class="t" style="left:167px;top:78.8px;font-size:7.5px;color:#000;text-shadow:.4px 0 0 rgba(0,0,0,0.35);transform:scaleX(0.9);">Info</div>
<div class="b" style="left:187.5px;top:78px;width:1px;height:8px;background:#D6D2C3;box-shadow:1px 0 0 #fff"></div>
<div class="t" style="left:296px;top:78.8px;font-size:7.5px;color:#000;text-shadow:.4px 0 0 rgba(0,0,0,0.35);transform:scaleX(0.9);">Name</div>
<div class="b" style="left:424.5px;top:77.5px;width:8px;height:8px;background:linear-gradient(#DCE6FB,#C2D2F4);border-radius:1px"></div>
<svg style="left:426.0px;top:80.5px" width="5" height="3" viewBox="0 0 5 3"><path d="M.5 .5L2.5 2.5 4.5 .5" stroke="#4D6185" stroke-width="1" fill="none"/></svg>
<div class="b" style="left:434.5px;top:78px;width:1px;height:8px;background:#D6D2C3;box-shadow:1px 0 0 #fff"></div>
<div class="t" style="left:440px;top:78.8px;font-size:7.5px;color:#000;text-shadow:.4px 0 0 rgba(0,0,0,0.35);transform:scaleX(0.9);">Priority</div>
<div class="b" style="left:464px;top:77.5px;width:8px;height:8px;background:linear-gradient(#DCE6FB,#C2D2F4);border-radius:1px"></div>
<svg style="left:465.5px;top:80.5px" width="5" height="3" viewBox="0 0 5 3"><path d="M.5 .5L2.5 2.5 4.5 .5" stroke="#4D6185" stroke-width="1" fill="none"/></svg>
<div class="b" style="left:474.5px;top:78px;width:1px;height:8px;background:#D6D2C3;box-shadow:1px 0 0 #fff"></div>
<div class="t" style="left:485px;top:78.8px;font-size:7.5px;color:#000;text-shadow:.4px 0 0 rgba(0,0,0,0.35);transform:scaleX(0.9);">Due Date&amp;Time</div>
<div class="b" style="left:543px;top:78px;width:1px;height:8px;background:#D6D2C3;box-shadow:1px 0 0 #fff"></div>
<div class="t" style="left:550px;top:78.8px;font-size:7.5px;color:#000;text-shadow:.4px 0 0 rgba(0,0,0,0.35);transform:scaleX(0.9);">Status</div>
<div class="b" style="left:574.5px;top:77.5px;width:8px;height:8px;background:linear-gradient(#DCE6FB,#C2D2F4);border-radius:1px"></div>
<svg style="left:576.0px;top:80.5px" width="5" height="3" viewBox="0 0 5 3"><path d="M.5 .5L2.5 2.5 4.5 .5" stroke="#4D6185" stroke-width="1" fill="none"/></svg>
<div class="b" style="left:584.5px;top:78px;width:1px;height:8px;background:#D6D2C3;box-shadow:1px 0 0 #fff"></div>
<div class="t" style="left:587px;top:78.8px;font-size:7.5px;color:#000;text-shadow:.4px 0 0 rgba(0,0,0,0.35);transform:scaleX(0.9);">Complete</div>
<div class="b" style="left:615.5px;top:78px;width:1px;height:8px;background:#D6D2C3;box-shadow:1px 0 0 #fff"></div>
<div class="t" style="left:625px;top:78.8px;font-size:7.5px;color:#000;text-shadow:.4px 0 0 rgba(0,0,0,0.35);transform:scaleX(0.9);">Category</div>
<svg style="left:663px;top:80px" width="7" height="6" viewBox="0 0 7 6"><path d="M3.5 .5L6.5 5.5H.5z" fill="none" stroke="#B8B2A0" stroke-width=".9"/></svg>
<div class="b" style="left:116.5px;top:88px;width:557px;height:11px;background:#ECE9D8"></div>
<svg style="left:117.5px;top:90.5px" width="7" height="7" viewBox="0 0 7 7"><rect x=".5" y=".5" width="6" height="6" fill="#F4F3EE" stroke="#8FA0C0" stroke-width=".8"/><path d="M2 3.5h3" stroke="#000" stroke-width=".8"/></svg>
<div class="t" style="left:127px;top:90.3px;font-size:7.5px;color:#000;text-shadow:.4px 0 0 rgba(0,0,0,0.35);transform:scaleX(0.9);">Category : 7. Christmas Day</div>
<svg width="0" height="0" style="position:absolute"><defs><g id="pN"><circle cx="5" cy="5" r="4.9" fill="#E0601A"/><circle cx="5" cy="5" r="3.6" fill="#F0843A"/><circle cx="5" cy="5" r="1.7" fill="#fff"/></g><g id="pH"><rect x=".3" y=".3" width="9.4" height="9.4" rx="1" fill="#CC2A0A"/><path d="M2.5 6.3l2.5-2.5 2.5 2.5" stroke="#fff" stroke-width="1.5" fill="none"/></g><g id="pX"><rect x=".3" y=".3" width="9.4" height="9.4" rx="1" fill="#CC2A0A"/><path d="M2.8 5l2.2-2 2.2 2M2.8 7.8l2.2-2 2.2 2" stroke="#fff" stroke-width="1.1" fill="none"/></g><g id="pL"><rect x=".3" y=".3" width="9.4" height="9.4" rx="1" fill="#3AAE3A"/><path d="M2.5 3.8l2.5 2.5 2.5-2.5" stroke="#fff" stroke-width="1.5" fill="none"/></g><g id="pW"><rect x=".3" y=".3" width="9.4" height="9.4" rx="1" fill="#3AAE3A"/><path d="M2.8 2.5l2.2 2 2.2-2M2.8 5.3l2.2 2 2.2-2" stroke="#fff" stroke-width="1.1" fill="none"/></g><g id="doc"><linearGradient id="dg" x1="1" y1="0" x2="0" y2="1"><stop offset="0" stop-color="#FFFFFF"/><stop offset="1" stop-color="#A9C4EE"/></linearGradient><path d="M.5 .5h5l3 3v6H.5z" fill="url(#dg)" stroke="#98B2DA" stroke-width=".7"/><path d="M5.5 .5v3h3" fill="#E4EEFA" stroke="#98B2DA" stroke-width=".5"/></g><g id="pen"><path d="M.8 9.2L5.2 5" stroke="#2452C0" stroke-width="1.3"/><path d="M4.3 5.8L5.8 2.6 9.6 .6 8 2.8 9.4 3 6.4 5.2z" fill="#2E62D0"/><path d="M6 3.5l1.2-.5-.8 1.5z" fill="#D0E0FA"/></g><g id="cb"><rect x=".5" y=".5" width="8" height="8" fill="url(#cbg)" stroke="#5A7AB8" stroke-width=".8"/></g><linearGradient id="cbg" x1="0" y1="0" x2="1" y2="1"><stop offset="0" stop-color="#DCDAD0"/><stop offset="1" stop-color="#FDFDFB"/></linearGradient></defs></svg>
<div class="b" style="left:125.5px;top:99.5px;width:547px;height:13.75px;background:#316AC5;border-bottom:1px solid #D6D2C4"></div>
<div class="b" style="left:145px;top:99.5px;width:1px;height:12.75px;background:#6C90CE"></div>
<div class="b" style="left:187px;top:99.5px;width:1px;height:12.75px;background:#6C90CE"></div>
<div class="b" style="left:434px;top:99.5px;width:1px;height:12.75px;background:#6C90CE"></div>
<div class="b" style="left:474px;top:99.5px;width:1px;height:12.75px;background:#6C90CE"></div>
<div class="b" style="left:543px;top:99.5px;width:1px;height:12.75px;background:#6C90CE"></div>
<div class="b" style="left:584px;top:99.5px;width:1px;height:12.75px;background:#6C90CE"></div>
<div class="b" style="left:615px;top:99.5px;width:1px;height:12.75px;background:#6C90CE"></div>
<svg style="left:131px;top:102.1px" width="9" height="9"><use href="#cb"/></svg>
<div class="b" style="left:189px;top:99.5px;width:245px;height:12.75px;overflow:hidden">
<div class="t" style="left:0px;top:1.7px;font-size:7.5px;color:#fff;text-shadow:.4px 0 0 rgba(255,255,255,0.35);transform:scaleX(0.9);">Relax and stay calm if you're cooking dinner and make sure that your family and frie</div>
</div>
<svg style="left:436.3px;top:100.7px" width="10" height="10"><use href="#pN"/></svg>
<div class="t" style="left:449.5px;top:101.2px;font-size:7.5px;color:#fff;text-shadow:.4px 0 0 rgba(255,255,255,0.35);transform:scaleX(0.9);">Normal</div>
<div class="t" style="left:479px;top:101.2px;font-size:7.5px;color:#fff;text-shadow:.4px 0 0 rgba(255,255,255,0.35);transform:scaleX(0.9);">25.12.2005 7:30:00</div>
<svg style="left:545.8px;top:101.3px" width="10" height="11"><use href="#doc"/></svg>
<div class="t" style="left:557px;top:101.6px;font-size:7.5px;color:#fff;text-shadow:.4px 0 0 rgba(255,255,255,0.35);transform:scaleX(0.9);">Created</div>
<div class="t" style="left:595px;top:101.6px;font-size:7.5px;color:#fff;text-shadow:.4px 0 0 rgba(255,255,255,0.35);transform:scaleX(0.9);">0 %</div>
<svg style="left:617.5px;top:101.5px" width="10" height="10" viewBox="0 0 10 10"><path d="M.8 9.2L5.2 5" stroke="#0A2A7A" stroke-width="1.3"/><path d="M4.3 5.8L5.8 2.6 9.6 .6 8 2.8 9.4 3 6.4 5.2z" fill="#0A2A7A"/><path d="M6 3.5l1.5-.8-.8 2z" fill="#fff"/></svg>
<div class="t" style="left:631px;top:101.2px;font-size:7.5px;color:#fff;text-shadow:.4px 0 0 rgba(255,255,255,0.35);transform:scaleX(0.9);">7. Christmas D</div>
<div class="b" style="left:125.5px;top:113.25px;width:547px;height:13.75px;background:#fff;border-bottom:1px solid #D6D2C4"></div>
<div class="b" style="left:145px;top:113.25px;width:1px;height:12.75px;background:#D6D2C4"></div>
<div class="b" style="left:187px;top:113.25px;width:1px;height:12.75px;background:#D6D2C4"></div>
<div class="b" style="left:434px;top:113.25px;width:1px;height:12.75px;background:#D6D2C4"></div>
<div class="b" style="left:474px;top:113.25px;width:1px;height:12.75px;background:#D6D2C4"></div>
<div class="b" style="left:543px;top:113.25px;width:1px;height:12.75px;background:#D6D2C4"></div>
<div class="b" style="left:584px;top:113.25px;width:1px;height:12.75px;background:#D6D2C4"></div>
<div class="b" style="left:615px;top:113.25px;width:1px;height:12.75px;background:#D6D2C4"></div>
<svg style="left:131px;top:115.85px" width="9" height="9"><use href="#cb"/></svg>
<div class="b" style="left:189px;top:113.25px;width:245px;height:12.75px;overflow:hidden">
<div class="t" style="left:0px;top:1.7px;font-size:7.5px;color:#000;text-shadow:.4px 0 0 rgba(0,0,0,0.35);transform:scaleX(0.9);">Send children packing.</div>
</div>
<svg style="left:436.3px;top:114.45px" width="10" height="10"><use href="#pH"/></svg>
<div class="t" style="left:449.5px;top:114.95px;font-size:7.5px;color:#000;text-shadow:.4px 0 0 rgba(0,0,0,0.35);transform:scaleX(0.9);">High</div>
<div class="t" style="left:479px;top:114.95px;font-size:7.5px;color:#000;text-shadow:.4px 0 0 rgba(0,0,0,0.35);transform:scaleX(0.9);">25.12.2005 7:35:00</div>
<svg style="left:545.8px;top:115.05px" width="10" height="11"><use href="#doc"/></svg>
<div class="t" style="left:557px;top:115.35px;font-size:7.5px;color:#000;text-shadow:.4px 0 0 rgba(0,0,0,0.35);transform:scaleX(0.9);">Created</div>
<div class="t" style="left:595px;top:115.35px;font-size:7.5px;color:#000;text-shadow:.4px 0 0 rgba(0,0,0,0.35);transform:scaleX(0.9);">0 %</div>
<svg style="left:617.5px;top:115.25px" width="10" height="10"><use href="#pen"/></svg>
<div class="t" style="left:631px;top:114.95px;font-size:7.5px;color:#000;text-shadow:.4px 0 0 rgba(0,0,0,0.35);transform:scaleX(0.9);">7. Christmas D</div>
<div class="b" style="left:125.5px;top:127.0px;width:547px;height:13.75px;background:#fff;border-bottom:1px solid #D6D2C4"></div>
<div class="b" style="left:145px;top:127.0px;width:1px;height:12.75px;background:#D6D2C4"></div>
<div class="b" style="left:187px;top:127.0px;width:1px;height:12.75px;background:#D6D2C4"></div>
<div class="b" style="left:434px;top:127.0px;width:1px;height:12.75px;background:#D6D2C4"></div>
<div class="b" style="left:474px;top:127.0px;width:1px;height:12.75px;background:#D6D2C4"></div>
<div class="b" style="left:543px;top:127.0px;width:1px;height:12.75px;background:#D6D2C4"></div>
<div class="b" style="left:584px;top:127.0px;width:1px;height:12.75px;background:#D6D2C4"></div>
<div class="b" style="left:615px;top:127.0px;width:1px;height:12.75px;background:#D6D2C4"></div>
<svg style="left:131px;top:129.6px" width="9" height="9"><use href="#cb"/></svg>
<div class="b" style="left:189px;top:127.0px;width:245px;height:12.75px;overflow:hidden">
<div class="t" style="left:0px;top:1.7px;font-size:7.5px;color:#000;text-shadow:.4px 0 0 rgba(0,0,0,0.35);transform:scaleX(0.9);">Haul self out of bed.</div>
</div>
<svg style="left:436.3px;top:128.2px" width="10" height="10"><use href="#pN"/></svg>
<div class="t" style="left:449.5px;top:128.7px;font-size:7.5px;color:#000;text-shadow:.4px 0 0 rgba(0,0,0,0.35);transform:scaleX(0.9);">Normal</div>
<div class="t" style="left:479px;top:128.7px;font-size:7.5px;color:#000;text-shadow:.4px 0 0 rgba(0,0,0,0.35);transform:scaleX(0.9);">25.12.2005 7:40:00</div>
<svg style="left:545.8px;top:128.8px" width="10" height="11"><use href="#doc"/></svg>
<div class="t" style="left:557px;top:129.1px;font-size:7.5px;color:#000;text-shadow:.4px 0 0 rgba(0,0,0,0.35);transform:scaleX(0.9);">Created</div>
<div class="t" style="left:595px;top:129.1px;font-size:7.5px;color:#000;text-shadow:.4px 0 0 rgba(0,0,0,0.35);transform:scaleX(0.9);">0 %</div>
<svg style="left:617.5px;top:129.0px" width="10" height="10"><use href="#pen"/></svg>
<div class="t" style="left:631px;top:128.7px;font-size:7.5px;color:#000;text-shadow:.4px 0 0 rgba(0,0,0,0.35);transform:scaleX(0.9);">7. Christmas D</div>
<div class="b" style="left:125.5px;top:140.75px;width:547px;height:13.75px;background:#fff;border-bottom:1px solid #D6D2C4"></div>
<div class="b" style="left:145px;top:140.75px;width:1px;height:12.75px;background:#D6D2C4"></div>
<div class="b" style="left:187px;top:140.75px;width:1px;height:12.75px;background:#D6D2C4"></div>
<div class="b" style="left:434px;top:140.75px;width:1px;height:12.75px;background:#D6D2C4"></div>
<div class="b" style="left:474px;top:140.75px;width:1px;height:12.75px;background:#D6D2C4"></div>
<div class="b" style="left:543px;top:140.75px;width:1px;height:12.75px;background:#D6D2C4"></div>
<div class="b" style="left:584px;top:140.75px;width:1px;height:12.75px;background:#D6D2C4"></div>
<div class="b" style="left:615px;top:140.75px;width:1px;height:12.75px;background:#D6D2C4"></div>
<svg style="left:131px;top:143.35px" width="9" height="9"><use href="#cb"/></svg>
<div class="b" style="left:189px;top:140.75px;width:245px;height:12.75px;overflow:hidden">
<div class="t" style="left:0px;top:1.7px;font-size:7.5px;color:#000;text-shadow:.4px 0 0 rgba(0,0,0,0.35);transform:scaleX(0.9);">Turn on oven.</div>
</div>
<svg style="left:436.3px;top:141.95px" width="10" height="10"><use href="#pH"/></svg>
<div class="t" style="left:449.5px;top:142.45px;font-size:7.5px;color:#000;text-shadow:.4px 0 0 rgba(0,0,0,0.35);transform:scaleX(0.9);">High</div>
<div class="t" style="left:479px;top:142.45px;font-size:7.5px;color:#000;text-shadow:.4px 0 0 rgba(0,0,0,0.35);transform:scaleX(0.9);">25.12.2005 7:43:00</div>
<svg style="left:545.8px;top:142.55px" width="10" height="11"><use href="#doc"/></svg>
<div class="t" style="left:557px;top:142.85px;font-size:7.5px;color:#000;text-shadow:.4px 0 0 rgba(0,0,0,0.35);transform:scaleX(0.9);">Created</div>
<div class="t" style="left:595px;top:142.85px;font-size:7.5px;color:#000;text-shadow:.4px 0 0 rgba(0,0,0,0.35);transform:scaleX(0.9);">0 %</div>
<svg style="left:617.5px;top:142.75px" width="10" height="10"><use href="#pen"/></svg>
<div class="t" style="left:631px;top:142.45px;font-size:7.5px;color:#000;text-shadow:.4px 0 0 rgba(0,0,0,0.35);transform:scaleX(0.9);">7. Christmas D</div>
<div class="b" style="left:125.5px;top:154.5px;width:547px;height:13.75px;background:#fff;border-bottom:1px solid #D6D2C4"></div>
<div class="b" style="left:145px;top:154.5px;width:1px;height:12.75px;background:#D6D2C4"></div>
<div class="b" style="left:187px;top:154.5px;width:1px;height:12.75px;background:#D6D2C4"></div>
<div class="b" style="left:434px;top:154.5px;width:1px;height:12.75px;background:#D6D2C4"></div>
<div class="b" style="left:474px;top:154.5px;width:1px;height:12.75px;background:#D6D2C4"></div>
<div class="b" style="left:543px;top:154.5px;width:1px;height:12.75px;background:#D6D2C4"></div>
<div class="b" style="left:584px;top:154.5px;width:1px;height:12.75px;background:#D6D2C4"></div>
<div class="b" style="left:615px;top:154.5px;width:1px;height:12.75px;background:#D6D2C4"></div>
<svg style="left:131px;top:157.1px" width="9" height="9"><use href="#cb"/></svg>
<div class="b" style="left:189px;top:154.5px;width:245px;height:12.75px;overflow:hidden">
<div class="t" style="left:0px;top:1.7px;font-size:7.5px;color:#000;text-shadow:.4px 0 0 rgba(0,0,0,0.35);transform:scaleX(0.9);">Breakfast</div>
</div>
<svg style="left:436.3px;top:155.7px" width="10" height="10"><use href="#pN"/></svg>
<div class="t" style="left:449.5px;top:156.2px;font-size:7.5px;color:#000;text-shadow:.4px 0 0 rgba(0,0,0,0.35);transform:scaleX(0.9);">Normal</div>
<div class="t" style="left:479px;top:156.2px;font-size:7.5px;color:#000;text-shadow:.4px 0 0 rgba(0,0,0,0.35);transform:scaleX(0.9);">25.12.2005 7:45:00</div>
<svg style="left:545.8px;top:156.3px" width="10" height="11"><use href="#doc"/></svg>
<div class="t" style="left:557px;top:156.6px;font-size:7.5px;color:#000;text-shadow:.4px 0 0 rgba(0,0,0,0.35);transform:scaleX(0.9);">Created</div>
<div class="t" style="left:595px;top:156.6px;font-size:7.5px;color:#000;text-shadow:.4px 0 0 rgba(0,0,0,0.35);transform:scaleX(0.9);">0 %</div>
<svg style="left:617.5px;top:156.5px" width="10" height="10"><use href="#pen"/></svg>
<div class="t" style="left:631px;top:156.2px;font-size:7.5px;color:#000;text-shadow:.4px 0 0 rgba(0,0,0,0.35);transform:scaleX(0.9);">7. Christmas D</div>
<div class="b" style="left:125.5px;top:168.25px;width:547px;height:12.0px;background:#fff;border-bottom:1px solid #D6D2C4"></div>
<div class="t" style="left:139px;top:170.15px;font-size:7.5px;color:#1F1FE0;text-shadow:.4px 0 0 rgba(31,31,224,0.35);transform:scaleX(0.885);">Lightly boiled egg; a single slice of wholemeal toast with lashings of butter and soothing, energy-rich Kashmiri honey. Coffee. Tangerine. Rise from table fully energized.</div>
<div class="b" style="left:125.5px;top:180.25px;width:547px;height:13.75px;background:#fff;border-bottom:1px solid #D6D2C4"></div>
<div class="b" style="left:145px;top:180.25px;width:1px;height:12.75px;background:#D6D2C4"></div>
<div class="b" style="left:187px;top:180.25px;width:1px;height:12.75px;background:#D6D2C4"></div>
<div class="b" style="left:434px;top:180.25px;width:1px;height:12.75px;background:#D6D2C4"></div>
<div class="b" style="left:474px;top:180.25px;width:1px;height:12.75px;background:#D6D2C4"></div>
<div class="b" style="left:543px;top:180.25px;width:1px;height:12.75px;background:#D6D2C4"></div>
<div class="b" style="left:584px;top:180.25px;width:1px;height:12.75px;background:#D6D2C4"></div>
<div class="b" style="left:615px;top:180.25px;width:1px;height:12.75px;background:#D6D2C4"></div>
<svg style="left:131px;top:182.85px" width="9" height="9"><use href="#cb"/></svg>
<div class="b" style="left:189px;top:180.25px;width:245px;height:12.75px;overflow:hidden">
<div class="t" style="left:0px;top:1.7px;font-size:7.5px;color:#000;text-shadow:.4px 0 0 rgba(0,0,0,0.35);transform:scaleX(0.9);">Place turkey in oven</div>
</div>
<svg style="left:436.3px;top:181.45px" width="10" height="10"><use href="#pN"/></svg>
<div class="t" style="left:449.5px;top:181.95px;font-size:7.5px;color:#000;text-shadow:.4px 0 0 rgba(0,0,0,0.35);transform:scaleX(0.9);">Normal</div>
<div class="t" style="left:479px;top:181.95px;font-size:7.5px;color:#000;text-shadow:.4px 0 0 rgba(0,0,0,0.35);transform:scaleX(0.9);">25.12.2005 8:00:00</div>
<svg style="left:545.8px;top:182.05px" width="10" height="11"><use href="#doc"/></svg>
<div class="t" style="left:557px;top:182.35px;font-size:7.5px;color:#000;text-shadow:.4px 0 0 rgba(0,0,0,0.35);transform:scaleX(0.9);">Created</div>
<div class="t" style="left:595px;top:182.35px;font-size:7.5px;color:#000;text-shadow:.4px 0 0 rgba(0,0,0,0.35);transform:scaleX(0.9);">0 %</div>
<svg style="left:617.5px;top:182.25px" width="10" height="10"><use href="#pen"/></svg>
<div class="t" style="left:631px;top:181.95px;font-size:7.5px;color:#000;text-shadow:.4px 0 0 rgba(0,0,0,0.35);transform:scaleX(0.9);">7. Christmas D</div>
<div class="b" style="left:125.5px;top:194.0px;width:547px;height:13.75px;background:#fff;border-bottom:1px solid #D6D2C4"></div>
<div class="b" style="left:145px;top:194.0px;width:1px;height:12.75px;background:#D6D2C4"></div>
<div class="b" style="left:187px;top:194.0px;width:1px;height:12.75px;background:#D6D2C4"></div>
<div class="b" style="left:434px;top:194.0px;width:1px;height:12.75px;background:#D6D2C4"></div>
<div class="b" style="left:474px;top:194.0px;width:1px;height:12.75px;background:#D6D2C4"></div>
<div class="b" style="left:543px;top:194.0px;width:1px;height:12.75px;background:#D6D2C4"></div>
<div class="b" style="left:584px;top:194.0px;width:1px;height:12.75px;background:#D6D2C4"></div>
<div class="b" style="left:615px;top:194.0px;width:1px;height:12.75px;background:#D6D2C4"></div>
<svg style="left:131px;top:196.6px" width="9" height="9"><use href="#cb"/></svg>
<div class="b" style="left:189px;top:194.0px;width:245px;height:12.75px;overflow:hidden">
<div class="t" style="left:0px;top:1.7px;font-size:7.5px;color:#000;text-shadow:.4px 0 0 rgba(0,0,0,0.35);transform:scaleX(0.9);">Start warming plates and serving dishes.</div>
</div>
<svg style="left:436.3px;top:195.2px" width="10" height="10"><use href="#pN"/></svg>
<div class="t" style="left:449.5px;top:195.7px;font-size:7.5px;color:#000;text-shadow:.4px 0 0 rgba(0,0,0,0.35);transform:scaleX(0.9);">Normal</div>
<div class="t" style="left:479px;top:195.7px;font-size:7.5px;color:#000;text-shadow:.4px 0 0 rgba(0,0,0,0.35);transform:scaleX(0.9);">25.12.2005 9:30:00</div>
<svg style="left:545.8px;top:195.8px" width="10" height="11"><use href="#doc"/></svg>
<div class="t" style="left:557px;top:196.1px;font-size:7.5px;color:#000;text-shadow:.4px 0 0 rgba(0,0,0,0.35);transform:scaleX(0.9);">Created</div>
<div class="t" style="left:595px;top:196.1px;font-size:7.5px;color:#000;text-shadow:.4px 0 0 rgba(0,0,0,0.35);transform:scaleX(0.9);">0 %</div>
<svg style="left:617.5px;top:196.0px" width="10" height="10"><use href="#pen"/></svg>
<div class="t" style="left:631px;top:195.7px;font-size:7.5px;color:#000;text-shadow:.4px 0 0 rgba(0,0,0,0.35);transform:scaleX(0.9);">7. Christmas D</div>
<div class="b" style="left:125.5px;top:207.75px;width:547px;height:13.75px;background:#fff;border-bottom:1px solid #D6D2C4"></div>
<div class="b" style="left:145px;top:207.75px;width:1px;height:12.75px;background:#D6D2C4"></div>
<div class="b" style="left:187px;top:207.75px;width:1px;height:12.75px;background:#D6D2C4"></div>
<div class="b" style="left:434px;top:207.75px;width:1px;height:12.75px;background:#D6D2C4"></div>
<div class="b" style="left:474px;top:207.75px;width:1px;height:12.75px;background:#D6D2C4"></div>
<div class="b" style="left:543px;top:207.75px;width:1px;height:12.75px;background:#D6D2C4"></div>
<div class="b" style="left:584px;top:207.75px;width:1px;height:12.75px;background:#D6D2C4"></div>
<div class="b" style="left:615px;top:207.75px;width:1px;height:12.75px;background:#D6D2C4"></div>
<svg style="left:131px;top:210.35px" width="9" height="9"><use href="#cb"/></svg>
<div class="b" style="left:189px;top:207.75px;width:245px;height:12.75px;overflow:hidden">
<div class="t" style="left:0px;top:1.7px;font-size:7.5px;color:#000;text-shadow:.4px 0 0 rgba(0,0,0,0.35);transform:scaleX(0.9);">Arrange tray for pre-lunch drinks, plus bowls for nibbles.</div>
</div>
<svg style="left:436.3px;top:208.95px" width="10" height="10"><use href="#pL"/></svg>
<div class="t" style="left:449.5px;top:209.45px;font-size:7.5px;color:#000;text-shadow:.4px 0 0 rgba(0,0,0,0.35);transform:scaleX(0.9);">Low</div>
<div class="t" style="left:479px;top:209.45px;font-size:7.5px;color:#000;text-shadow:.4px 0 0 rgba(0,0,0,0.35);transform:scaleX(0.9);">25.12.2005 9:35:00</div>
<svg style="left:545.8px;top:209.55px" width="10" height="11"><use href="#doc"/></svg>
<div class="t" style="left:557px;top:209.85px;font-size:7.5px;color:#000;text-shadow:.4px 0 0 rgba(0,0,0,0.35);transform:scaleX(0.9);">Created</div>
<div class="t" style="left:595px;top:209.85px;font-size:7.5px;color:#000;text-shadow:.4px 0 0 rgba(0,0,0,0.35);transform:scaleX(0.9);">0 %</div>
<svg style="left:617.5px;top:209.75px" width="10" height="10"><use href="#pen"/></svg>
<div class="t" style="left:631px;top:209.45px;font-size:7.5px;color:#000;text-shadow:.4px 0 0 rgba(0,0,0,0.35);transform:scaleX(0.9);">7. Christmas D</div>
<div class="b" style="left:125.5px;top:221.5px;width:547px;height:13.75px;background:#fff;border-bottom:1px solid #D6D2C4"></div>
<div class="b" style="left:145px;top:221.5px;width:1px;height:12.75px;background:#D6D2C4"></div>
<div class="b" style="left:187px;top:221.5px;width:1px;height:12.75px;background:#D6D2C4"></div>
<div class="b" style="left:434px;top:221.5px;width:1px;height:12.75px;background:#D6D2C4"></div>
<div class="b" style="left:474px;top:221.5px;width:1px;height:12.75px;background:#D6D2C4"></div>
<div class="b" style="left:543px;top:221.5px;width:1px;height:12.75px;background:#D6D2C4"></div>
<div class="b" style="left:584px;top:221.5px;width:1px;height:12.75px;background:#D6D2C4"></div>
<div class="b" style="left:615px;top:221.5px;width:1px;height:12.75px;background:#D6D2C4"></div>
<svg style="left:131px;top:224.1px" width="9" height="9"><use href="#cb"/></svg>
<div class="b" style="left:189px;top:221.5px;width:245px;height:12.75px;overflow:hidden">
<div class="t" style="left:0px;top:1.7px;font-size:7.5px;color:#000;text-shadow:.4px 0 0 rgba(0,0,0,0.35);transform:scaleX(0.9);">Mop up sick from child who overdosed on chocolate coins in stocking.</div>
</div>
<svg style="left:436.3px;top:222.7px" width="10" height="10"><use href="#pN"/></svg>
<div class="t" style="left:449.5px;top:223.2px;font-size:7.5px;color:#000;text-shadow:.4px 0 0 rgba(0,0,0,0.35);transform:scaleX(0.9);">Normal</div>
<div class="t" style="left:479px;top:223.2px;font-size:7.5px;color:#000;text-shadow:.4px 0 0 rgba(0,0,0,0.35);transform:scaleX(0.9);">25.12.2005 9:40:00</div>
<svg style="left:545.8px;top:223.3px" width="10" height="11"><use href="#doc"/></svg>
<div class="t" style="left:557px;top:223.6px;font-size:7.5px;color:#000;text-shadow:.4px 0 0 rgba(0,0,0,0.35);transform:scaleX(0.9);">Created</div>
<div class="t" style="left:595px;top:223.6px;font-size:7.5px;color:#000;text-shadow:.4px 0 0 rgba(0,0,0,0.35);transform:scaleX(0.9);">0 %</div>
<svg style="left:617.5px;top:223.5px" width="10" height="10"><use href="#pen"/></svg>
<div class="t" style="left:631px;top:223.2px;font-size:7.5px;color:#000;text-shadow:.4px 0 0 rgba(0,0,0,0.35);transform:scaleX(0.9);">7. Christmas D</div>
<div class="b" style="left:125.5px;top:235.25px;width:547px;height:13.75px;background:#fff;border-bottom:1px solid #D6D2C4"></div>
<div class="b" style="left:145px;top:235.25px;width:1px;height:12.75px;background:#D6D2C4"></div>
<div class="b" style="left:187px;top:235.25px;width:1px;height:12.75px;background:#D6D2C4"></div>
<div class="b" style="left:434px;top:235.25px;width:1px;height:12.75px;background:#D6D2C4"></div>
<div class="b" style="left:474px;top:235.25px;width:1px;height:12.75px;background:#D6D2C4"></div>
<div class="b" style="left:543px;top:235.25px;width:1px;height:12.75px;background:#D6D2C4"></div>
<div class="b" style="left:584px;top:235.25px;width:1px;height:12.75px;background:#D6D2C4"></div>
<div class="b" style="left:615px;top:235.25px;width:1px;height:12.75px;background:#D6D2C4"></div>
<svg style="left:131px;top:237.85px" width="9" height="9"><use href="#cb"/></svg>
<div class="b" style="left:189px;top:235.25px;width:245px;height:12.75px;overflow:hidden">
<div class="t" style="left:0px;top:1.7px;font-size:7.5px;color:#000;text-shadow:.4px 0 0 rgba(0,0,0,0.35);transform:scaleX(0.9);">Blanch potatoes and parsnips for roasting.</div>
</div>
<svg style="left:436.3px;top:236.45px" width="10" height="10"><use href="#pN"/></svg>
<div class="t" style="left:449.5px;top:236.95px;font-size:7.5px;color:#000;text-shadow:.4px 0 0 rgba(0,0,0,0.35);transform:scaleX(0.9);">Normal</div>
<div class="t" style="left:479px;top:236.95px;font-size:7.5px;color:#000;text-shadow:.4px 0 0 rgba(0,0,0,0.35);transform:scaleX(0.9);">25.12.2005 9:45:00</div>
<svg style="left:545.8px;top:237.05px" width="10" height="11"><use href="#doc"/></svg>
<div class="t" style="left:557px;top:237.35px;font-size:7.5px;color:#000;text-shadow:.4px 0 0 rgba(0,0,0,0.35);transform:scaleX(0.9);">Created</div>
<div class="t" style="left:595px;top:237.35px;font-size:7.5px;color:#000;text-shadow:.4px 0 0 rgba(0,0,0,0.35);transform:scaleX(0.9);">0 %</div>
<svg style="left:617.5px;top:237.25px" width="10" height="10"><use href="#pen"/></svg>
<div class="t" style="left:631px;top:236.95px;font-size:7.5px;color:#000;text-shadow:.4px 0 0 rgba(0,0,0,0.35);transform:scaleX(0.9);">7. Christmas D</div>
<div class="b" style="left:125.5px;top:249.0px;width:547px;height:13.75px;background:#fff;border-bottom:1px solid #D6D2C4"></div>
<div class="b" style="left:145px;top:249.0px;width:1px;height:12.75px;background:#D6D2C4"></div>
<div class="b" style="left:187px;top:249.0px;width:1px;height:12.75px;background:#D6D2C4"></div>
<div class="b" style="left:434px;top:249.0px;width:1px;height:12.75px;background:#D6D2C4"></div>
<div class="b" style="left:474px;top:249.0px;width:1px;height:12.75px;background:#D6D2C4"></div>
<div class="b" style="left:543px;top:249.0px;width:1px;height:12.75px;background:#D6D2C4"></div>
<div class="b" style="left:584px;top:249.0px;width:1px;height:12.75px;background:#D6D2C4"></div>
<div class="b" style="left:615px;top:249.0px;width:1px;height:12.75px;background:#D6D2C4"></div>
<svg style="left:131px;top:251.6px" width="9" height="9"><use href="#cb"/></svg>
<div class="b" style="left:189px;top:249.0px;width:245px;height:12.75px;overflow:hidden">
<div class="t" style="left:0px;top:1.7px;font-size:7.5px;color:#000;text-shadow:.4px 0 0 rgba(0,0,0,0.35);transform:scaleX(0.9);">Bribe/browbeat/blackmail kids into laying table (under supervision).</div>
</div>
<svg style="left:436.3px;top:250.2px" width="10" height="10"><use href="#pN"/></svg>
<div class="t" style="left:449.5px;top:250.7px;font-size:7.5px;color:#000;text-shadow:.4px 0 0 rgba(0,0,0,0.35);transform:scaleX(0.9);">Normal</div>
<div class="t" style="left:477px;top:250.7px;font-size:7.5px;color:#000;text-shadow:.4px 0 0 rgba(0,0,0,0.35);transform:scaleX(0.9);">25.12.2005 10:00:00</div>
<svg style="left:545.8px;top:250.8px" width="10" height="11"><use href="#doc"/></svg>
<div class="t" style="left:557px;top:251.1px;font-size:7.5px;color:#000;text-shadow:.4px 0 0 rgba(0,0,0,0.35);transform:scaleX(0.9);">Created</div>
<div class="t" style="left:595px;top:251.1px;font-size:7.5px;color:#000;text-shadow:.4px 0 0 rgba(0,0,0,0.35);transform:scaleX(0.9);">0 %</div>
<svg style="left:617.5px;top:251.0px" width="10" height="10"><use href="#pen"/></svg>
<div class="t" style="left:631px;top:250.7px;font-size:7.5px;color:#000;text-shadow:.4px 0 0 rgba(0,0,0,0.35);transform:scaleX(0.9);">7. Christmas D</div>
<div class="b" style="left:125.5px;top:262.75px;width:547px;height:13.75px;background:#fff;border-bottom:1px solid #D6D2C4"></div>
<div class="b" style="left:145px;top:262.75px;width:1px;height:12.75px;background:#D6D2C4"></div>
<div class="b" style="left:187px;top:262.75px;width:1px;height:12.75px;background:#D6D2C4"></div>
<div class="b" style="left:434px;top:262.75px;width:1px;height:12.75px;background:#D6D2C4"></div>
<div class="b" style="left:474px;top:262.75px;width:1px;height:12.75px;background:#D6D2C4"></div>
<div class="b" style="left:543px;top:262.75px;width:1px;height:12.75px;background:#D6D2C4"></div>
<div class="b" style="left:584px;top:262.75px;width:1px;height:12.75px;background:#D6D2C4"></div>
<div class="b" style="left:615px;top:262.75px;width:1px;height:12.75px;background:#D6D2C4"></div>
<svg style="left:131px;top:265.35px" width="9" height="9"><use href="#cb"/></svg>
<div class="b" style="left:189px;top:262.75px;width:245px;height:12.75px;overflow:hidden">
<div class="t" style="left:0px;top:1.7px;font-size:7.5px;color:#000;text-shadow:.4px 0 0 rgba(0,0,0,0.35);transform:scaleX(0.9);">Check their handiwork.</div>
</div>
<svg style="left:436.3px;top:263.95px" width="10" height="10"><use href="#pH"/></svg>
<div class="t" style="left:449.5px;top:264.45px;font-size:7.5px;color:#000;text-shadow:.4px 0 0 rgba(0,0,0,0.35);transform:scaleX(0.9);">High</div>
<svg style="left:545.8px;top:264.55px" width="10" height="11"><use href="#doc"/></svg>
<div class="t" style="left:557px;top:264.85px;font-size:7.5px;color:#000;text-shadow:.4px 0 0 rgba(0,0,0,0.35);transform:scaleX(0.9);">Created</div>
<div class="t" style="left:595px;top:264.85px;font-size:7.5px;color:#000;text-shadow:.4px 0 0 rgba(0,0,0,0.35);transform:scaleX(0.9);">0 %</div>
<svg style="left:617.5px;top:264.75px" width="10" height="10"><use href="#pen"/></svg>
<div class="t" style="left:631px;top:264.45px;font-size:7.5px;color:#000;text-shadow:.4px 0 0 rgba(0,0,0,0.35);transform:scaleX(0.9);">7. Christmas D</div>
<div class="b" style="left:125.5px;top:276.5px;width:547px;height:13.75px;background:#fff;border-bottom:1px solid #D6D2C4"></div>
<div class="b" style="left:145px;top:276.5px;width:1px;height:12.75px;background:#D6D2C4"></div>
<div class="b" style="left:187px;top:276.5px;width:1px;height:12.75px;background:#D6D2C4"></div>
<div class="b" style="left:434px;top:276.5px;width:1px;height:12.75px;background:#D6D2C4"></div>
<div class="b" style="left:474px;top:276.5px;width:1px;height:12.75px;background:#D6D2C4"></div>
<div class="b" style="left:543px;top:276.5px;width:1px;height:12.75px;background:#D6D2C4"></div>
<div class="b" style="left:584px;top:276.5px;width:1px;height:12.75px;background:#D6D2C4"></div>
<div class="b" style="left:615px;top:276.5px;width:1px;height:12.75px;background:#D6D2C4"></div>
<svg style="left:131px;top:279.1px" width="9" height="9"><use href="#cb"/></svg>
<div class="b" style="left:189px;top:276.5px;width:245px;height:12.75px;overflow:hidden">
<div class="t" style="left:0px;top:1.7px;font-size:7.5px;color:#000;text-shadow:.4px 0 0 rgba(0,0,0,0.35);transform:scaleX(0.9);">White wine to fridge.</div>
</div>
<svg style="left:436.3px;top:277.7px" width="10" height="10"><use href="#pN"/></svg>
<div class="t" style="left:449.5px;top:278.2px;font-size:7.5px;color:#000;text-shadow:.4px 0 0 rgba(0,0,0,0.35);transform:scaleX(0.9);">Normal</div>
<svg style="left:545.8px;top:278.3px" width="10" height="11"><use href="#doc"/></svg>
<div class="t" style="left:557px;top:278.6px;font-size:7.5px;color:#000;text-shadow:.4px 0 0 rgba(0,0,0,0.35);transform:scaleX(0.9);">Created</div>
<div class="t" style="left:595px;top:278.6px;font-size:7.5px;color:#000;text-shadow:.4px 0 0 rgba(0,0,0,0.35);transform:scaleX(0.9);">0 %</div>
<svg style="left:617.5px;top:278.5px" width="10" height="10"><use href="#pen"/></svg>
<div class="t" style="left:631px;top:278.2px;font-size:7.5px;color:#000;text-shadow:.4px 0 0 rgba(0,0,0,0.35);transform:scaleX(0.9);">7. Christmas D</div>
<div class="b" style="left:125.5px;top:290.25px;width:547px;height:13.75px;background:#fff;border-bottom:1px solid #D6D2C4"></div>
<div class="b" style="left:145px;top:290.25px;width:1px;height:12.75px;background:#D6D2C4"></div>
<div class="b" style="left:187px;top:290.25px;width:1px;height:12.75px;background:#D6D2C4"></div>
<div class="b" style="left:434px;top:290.25px;width:1px;height:12.75px;background:#D6D2C4"></div>
<div class="b" style="left:474px;top:290.25px;width:1px;height:12.75px;background:#D6D2C4"></div>
<div class="b" style="left:543px;top:290.25px;width:1px;height:12.75px;background:#D6D2C4"></div>
<div class="b" style="left:584px;top:290.25px;width:1px;height:12.75px;background:#D6D2C4"></div>
<div class="b" style="left:615px;top:290.25px;width:1px;height:12.75px;background:#D6D2C4"></div>
<svg style="left:131px;top:292.85px" width="9" height="9"><use href="#cb"/></svg>
<div class="b" style="left:189px;top:290.25px;width:245px;height:12.75px;overflow:hidden">
<div class="t" style="left:0px;top:1.7px;font-size:7.5px;color:#000;text-shadow:.4px 0 0 rgba(0,0,0,0.35);transform:scaleX(0.9);">Baste turkey.</div>
</div>
<svg style="left:436.3px;top:291.45px" width="10" height="10"><use href="#pN"/></svg>
<div class="t" style="left:449.5px;top:291.95px;font-size:7.5px;color:#000;text-shadow:.4px 0 0 rgba(0,0,0,0.35);transform:scaleX(0.9);">Normal</div>
<svg style="left:545.8px;top:292.05px" width="10" height="11"><use href="#doc"/></svg>
<div class="t" style="left:557px;top:292.35px;font-size:7.5px;color:#000;text-shadow:.4px 0 0 rgba(0,0,0,0.35);transform:scaleX(0.9);">Created</div>
<div class="t" style="left:595px;top:292.35px;font-size:7.5px;color:#000;text-shadow:.4px 0 0 rgba(0,0,0,0.35);transform:scaleX(0.9);">0 %</div>
<svg style="left:617.5px;top:292.25px" width="10" height="10"><use href="#pen"/></svg>
<div class="t" style="left:631px;top:291.95px;font-size:7.5px;color:#000;text-shadow:.4px 0 0 rgba(0,0,0,0.35);transform:scaleX(0.9);">7. Christmas D</div>
<div class="b" style="left:125.5px;top:304.0px;width:547px;height:13.75px;background:#fff;border-bottom:1px solid #D6D2C4"></div>
<div class="b" style="left:145px;top:304.0px;width:1px;height:12.75px;background:#D6D2C4"></div>
<div class="b" style="left:187px;top:304.0px;width:1px;height:12.75px;background:#D6D2C4"></div>
<div class="b" style="left:434px;top:304.0px;width:1px;height:12.75px;background:#D6D2C4"></div>
<div class="b" style="left:474px;top:304.0px;width:1px;height:12.75px;background:#D6D2C4"></div>
<div class="b" style="left:543px;top:304.0px;width:1px;height:12.75px;background:#D6D2C4"></div>
<div class="b" style="left:584px;top:304.0px;width:1px;height:12.75px;background:#D6D2C4"></div>
<div class="b" style="left:615px;top:304.0px;width:1px;height:12.75px;background:#D6D2C4"></div>
<svg style="left:131px;top:306.6px" width="9" height="9"><use href="#cb"/></svg>
<div class="b" style="left:189px;top:304.0px;width:245px;height:12.75px;overflow:hidden">
<div class="t" style="left:0px;top:1.7px;font-size:7.5px;color:#000;text-shadow:.4px 0 0 rgba(0,0,0,0.35);transform:scaleX(0.9);">Uncork red wine.</div>
</div>
<svg style="left:436.3px;top:305.2px" width="10" height="10"><use href="#pX"/></svg>
<div class="t" style="left:449.5px;top:305.7px;font-size:7.5px;color:#000;text-shadow:.4px 0 0 rgba(0,0,0,0.35);transform:scaleX(0.9);">Highest</div>
<svg style="left:545.8px;top:305.8px" width="10" height="11"><use href="#doc"/></svg>
<div class="t" style="left:557px;top:306.1px;font-size:7.5px;color:#000;text-shadow:.4px 0 0 rgba(0,0,0,0.35);transform:scaleX(0.9);">Created</div>
<div class="t" style="left:595px;top:306.1px;font-size:7.5px;color:#000;text-shadow:.4px 0 0 rgba(0,0,0,0.35);transform:scaleX(0.9);">0 %</div>
<svg style="left:617.5px;top:306.0px" width="10" height="10"><use href="#pen"/></svg>
<div class="t" style="left:631px;top:305.7px;font-size:7.5px;color:#000;text-shadow:.4px 0 0 rgba(0,0,0,0.35);transform:scaleX(0.9);">7. Christmas D</div>
<div class="b" style="left:125.5px;top:317.75px;width:547px;height:13.75px;background:#fff;border-bottom:1px solid #D6D2C4"></div>
<div class="b" style="left:145px;top:317.75px;width:1px;height:12.75px;background:#D6D2C4"></div>
<div class="b" style="left:187px;top:317.75px;width:1px;height:12.75px;background:#D6D2C4"></div>
<div class="b" style="left:434px;top:317.75px;width:1px;height:12.75px;background:#D6D2C4"></div>
<div class="b" style="left:474px;top:317.75px;width:1px;height:12.75px;background:#D6D2C4"></div>
<div class="b" style="left:543px;top:317.75px;width:1px;height:12.75px;background:#D6D2C4"></div>
<div class="b" style="left:584px;top:317.75px;width:1px;height:12.75px;background:#D6D2C4"></div>
<div class="b" style="left:615px;top:317.75px;width:1px;height:12.75px;background:#D6D2C4"></div>
<svg style="left:131px;top:320.35px" width="9" height="9"><use href="#cb"/></svg>
<div class="b" style="left:189px;top:317.75px;width:245px;height:12.75px;overflow:hidden">
<div class="t" style="left:0px;top:1.7px;font-size:7.5px;color:#000;text-shadow:.4px 0 0 rgba(0,0,0,0.35);transform:scaleX(0.9);">Baste tastebuds with wine.</div>
</div>
<svg style="left:436.3px;top:318.95px" width="10" height="10"><use href="#pN"/></svg>
<div class="t" style="left:449.5px;top:319.45px;font-size:7.5px;color:#000;text-shadow:.4px 0 0 rgba(0,0,0,0.35);transform:scaleX(0.9);">Normal</div>
<div class="t" style="left:477px;top:319.45px;font-size:7.5px;color:#000;text-shadow:.4px 0 0 rgba(0,0,0,0.35);transform:scaleX(0.9);">25.12.2005 10:30:00</div>
<svg style="left:545.8px;top:319.55px" width="10" height="11"><use href="#doc"/></svg>
<div class="t" style="left:557px;top:319.85px;font-size:7.5px;color:#000;text-shadow:.4px 0 0 rgba(0,0,0,0.35);transform:scaleX(0.9);">Created</div>
<div class="t" style="left:595px;top:319.85px;font-size:7.5px;color:#000;text-shadow:.4px 0 0 rgba(0,0,0,0.35);transform:scaleX(0.9);">0 %</div>
<svg style="left:617.5px;top:319.75px" width="10" height="10"><use href="#pen"/></svg>
<div class="t" style="left:631px;top:319.45px;font-size:7.5px;color:#000;text-shadow:.4px 0 0 rgba(0,0,0,0.35);transform:scaleX(0.9);">7. Christmas D</div>
<div class="b" style="left:125.5px;top:331.5px;width:547px;height:13.75px;background:#fff;border-bottom:1px solid #D6D2C4"></div>
<div class="b" style="left:145px;top:331.5px;width:1px;height:12.75px;background:#D6D2C4"></div>
<div class="b" style="left:187px;top:331.5px;width:1px;height:12.75px;background:#D6D2C4"></div>
<div class="b" style="left:434px;top:331.5px;width:1px;height:12.75px;background:#D6D2C4"></div>
<div class="b" style="left:474px;top:331.5px;width:1px;height:12.75px;background:#D6D2C4"></div>
<div class="b" style="left:543px;top:331.5px;width:1px;height:12.75px;background:#D6D2C4"></div>
<div class="b" style="left:584px;top:331.5px;width:1px;height:12.75px;background:#D6D2C4"></div>
<div class="b" style="left:615px;top:331.5px;width:1px;height:12.75px;background:#D6D2C4"></div>
<svg style="left:131px;top:334.1px" width="9" height="9"><use href="#cb"/></svg>
<div class="b" style="left:189px;top:331.5px;width:245px;height:12.75px;overflow:hidden">
<div class="t" style="left:0px;top:1.7px;font-size:7.5px;color:#000;text-shadow:.4px 0 0 rgba(0,0,0,0.35);transform:scaleX(0.9);">Window for present-opening.</div>
</div>
<svg style="left:436.3px;top:332.7px" width="10" height="10"><use href="#pL"/></svg>
<div class="t" style="left:449.5px;top:333.2px;font-size:7.5px;color:#000;text-shadow:.4px 0 0 rgba(0,0,0,0.35);transform:scaleX(0.9);">Low</div>
<div class="t" style="left:477px;top:333.2px;font-size:7.5px;color:#000;text-shadow:.4px 0 0 rgba(0,0,0,0.35);transform:scaleX(0.9);">25.12.2005 10:31:00</div>
<svg style="left:545.8px;top:333.3px" width="10" height="11"><use href="#doc"/></svg>
<div class="t" style="left:557px;top:333.6px;font-size:7.5px;color:#000;text-shadow:.4px 0 0 rgba(0,0,0,0.35);transform:scaleX(0.9);">Created</div>
<div class="t" style="left:595px;top:333.6px;font-size:7.5px;color:#000;text-shadow:.4px 0 0 rgba(0,0,0,0.35);transform:scaleX(0.9);">0 %</div>
<svg style="left:617.5px;top:333.5px" width="10" height="10"><use href="#pen"/></svg>
<div class="t" style="left:631px;top:333.2px;font-size:7.5px;color:#000;text-shadow:.4px 0 0 rgba(0,0,0,0.35);transform:scaleX(0.9);">7. Christmas D</div>
<div class="b" style="left:125.5px;top:345.25px;width:547px;height:13.75px;background:#fff;border-bottom:1px solid #D6D2C4"></div>
<div class="b" style="left:145px;top:345.25px;width:1px;height:12.75px;background:#D6D2C4"></div>
<div class="b" style="left:187px;top:345.25px;width:1px;height:12.75px;background:#D6D2C4"></div>
<div class="b" style="left:434px;top:345.25px;width:1px;height:12.75px;background:#D6D2C4"></div>
<div class="b" style="left:474px;top:345.25px;width:1px;height:12.75px;background:#D6D2C4"></div>
<div class="b" style="left:543px;top:345.25px;width:1px;height:12.75px;background:#D6D2C4"></div>
<div class="b" style="left:584px;top:345.25px;width:1px;height:12.75px;background:#D6D2C4"></div>
<div class="b" style="left:615px;top:345.25px;width:1px;height:12.75px;background:#D6D2C4"></div>
<svg style="left:131px;top:347.85px" width="9" height="9"><use href="#cb"/></svg>
<div class="b" style="left:189px;top:345.25px;width:245px;height:12.75px;overflow:hidden">
<div class="t" style="left:0px;top:1.7px;font-size:7.5px;color:#000;text-shadow:.4px 0 0 rgba(0,0,0,0.35);transform:scaleX(0.9);">Put saucepan containing pudding in basin on to cooker ring.</div>
</div>
<svg style="left:436.3px;top:346.45px" width="10" height="10"><use href="#pN"/></svg>
<div class="t" style="left:449.5px;top:346.95px;font-size:7.5px;color:#000;text-shadow:.4px 0 0 rgba(0,0,0,0.35);transform:scaleX(0.9);">Normal</div>
<div class="t" style="left:477px;top:346.95px;font-size:7.5px;color:#000;text-shadow:.4px 0 0 rgba(0,0,0,0.35);transform:scaleX(0.9);">25.12.2005 11:45:00</div>
<svg style="left:545.8px;top:347.05px" width="10" height="11"><use href="#doc"/></svg>
<div class="t" style="left:557px;top:347.35px;font-size:7.5px;color:#000;text-shadow:.4px 0 0 rgba(0,0,0,0.35);transform:scaleX(0.9);">Created</div>
<div class="t" style="left:595px;top:347.35px;font-size:7.5px;color:#000;text-shadow:.4px 0 0 rgba(0,0,0,0.35);transform:scaleX(0.9);">0 %</div>
<svg style="left:617.5px;top:347.25px" width="10" height="10"><use href="#pen"/></svg>
<div class="t" style="left:631px;top:346.95px;font-size:7.5px;color:#000;text-shadow:.4px 0 0 rgba(0,0,0,0.35);transform:scaleX(0.9);">7. Christmas D</div>
<div class="b" style="left:125.5px;top:359.0px;width:547px;height:13.75px;background:#fff;border-bottom:1px solid #D6D2C4"></div>
<div class="b" style="left:145px;top:359.0px;width:1px;height:12.75px;background:#D6D2C4"></div>
<div class="b" style="left:187px;top:359.0px;width:1px;height:12.75px;background:#D6D2C4"></div>
<div class="b" style="left:434px;top:359.0px;width:1px;height:12.75px;background:#D6D2C4"></div>
<div class="b" style="left:474px;top:359.0px;width:1px;height:12.75px;background:#D6D2C4"></div>
<div class="b" style="left:543px;top:359.0px;width:1px;height:12.75px;background:#D6D2C4"></div>
<div class="b" style="left:584px;top:359.0px;width:1px;height:12.75px;background:#D6D2C4"></div>
<div class="b" style="left:615px;top:359.0px;width:1px;height:12.75px;background:#D6D2C4"></div>
<svg style="left:131px;top:361.6px" width="9" height="9"><use href="#cb"/></svg>
<div class="b" style="left:189px;top:359.0px;width:245px;height:12.75px;overflow:hidden">
<div class="t" style="left:0px;top:1.7px;font-size:7.5px;color:#000;text-shadow:.4px 0 0 rgba(0,0,0,0.35);transform:scaleX(0.9);">Add water until it comes two-thirds of the way up the side of the bowl.</div>
</div>
<svg style="left:436.3px;top:360.2px" width="10" height="10"><use href="#pN"/></svg>
<div class="t" style="left:449.5px;top:360.7px;font-size:7.5px;color:#000;text-shadow:.4px 0 0 rgba(0,0,0,0.35);transform:scaleX(0.9);">Normal</div>
<svg style="left:545.8px;top:360.8px" width="10" height="11"><use href="#doc"/></svg>
<div class="t" style="left:557px;top:361.1px;font-size:7.5px;color:#000;text-shadow:.4px 0 0 rgba(0,0,0,0.35);transform:scaleX(0.9);">Created</div>
<div class="t" style="left:595px;top:361.1px;font-size:7.5px;color:#000;text-shadow:.4px 0 0 rgba(0,0,0,0.35);transform:scaleX(0.9);">0 %</div>
<svg style="left:617.5px;top:361.0px" width="10" height="10"><use href="#pen"/></svg>
<div class="t" style="left:631px;top:360.7px;font-size:7.5px;color:#000;text-shadow:.4px 0 0 rgba(0,0,0,0.35);transform:scaleX(0.9);">7. Christmas D</div>
<div class="b" style="left:125.5px;top:372.75px;width:547px;height:13.75px;background:#fff;border-bottom:1px solid #D6D2C4"></div>
<div class="b" style="left:145px;top:372.75px;width:1px;height:12.75px;background:#D6D2C4"></div>
<div class="b" style="left:187px;top:372.75px;width:1px;height:12.75px;background:#D6D2C4"></div>
<div class="b" style="left:434px;top:372.75px;width:1px;height:12.75px;background:#D6D2C4"></div>
<div class="b" style="left:474px;top:372.75px;width:1px;height:12.75px;background:#D6D2C4"></div>
<div class="b" style="left:543px;top:372.75px;width:1px;height:12.75px;background:#D6D2C4"></div>
<div class="b" style="left:584px;top:372.75px;width:1px;height:12.75px;background:#D6D2C4"></div>
<div class="b" style="left:615px;top:372.75px;width:1px;height:12.75px;background:#D6D2C4"></div>
<svg style="left:131px;top:375.35px" width="9" height="9"><use href="#cb"/></svg>
<div class="b" style="left:189px;top:372.75px;width:245px;height:12.75px;overflow:hidden">
<div class="t" style="left:0px;top:1.7px;font-size:7.5px;color:#000;text-shadow:.4px 0 0 rgba(0,0,0,0.35);transform:scaleX(0.9);">Bring slowly to boil (check you have tied a string around the rim, to ensure easy liftin</div>
</div>
<svg style="left:436.3px;top:373.95px" width="10" height="10"><use href="#pL"/></svg>
<div class="t" style="left:449.5px;top:374.45px;font-size:7.5px;color:#000;text-shadow:.4px 0 0 rgba(0,0,0,0.35);transform:scaleX(0.9);">Low</div>
<svg style="left:545.8px;top:374.55px" width="10" height="11"><use href="#doc"/></svg>
<div class="t" style="left:557px;top:374.85px;font-size:7.5px;color:#000;text-shadow:.4px 0 0 rgba(0,0,0,0.35);transform:scaleX(0.9);">Created</div>
<div class="t" style="left:595px;top:374.85px;font-size:7.5px;color:#000;text-shadow:.4px 0 0 rgba(0,0,0,0.35);transform:scaleX(0.9);">0 %</div>
<svg style="left:617.5px;top:374.75px" width="10" height="10"><use href="#pen"/></svg>
<div class="t" style="left:631px;top:374.45px;font-size:7.5px;color:#000;text-shadow:.4px 0 0 rgba(0,0,0,0.35);transform:scaleX(0.9);">7. Christmas D</div>
<div class="b" style="left:125.5px;top:386.5px;width:547px;height:13.75px;background:#fff;border-bottom:1px solid #D6D2C4"></div>
<div class="b" style="left:145px;top:386.5px;width:1px;height:12.75px;background:#D6D2C4"></div>
<div class="b" style="left:187px;top:386.5px;width:1px;height:12.75px;background:#D6D2C4"></div>
<div class="b" style="left:434px;top:386.5px;width:1px;height:12.75px;background:#D6D2C4"></div>
<div class="b" style="left:474px;top:386.5px;width:1px;height:12.75px;background:#D6D2C4"></div>
<div class="b" style="left:543px;top:386.5px;width:1px;height:12.75px;background:#D6D2C4"></div>
<div class="b" style="left:584px;top:386.5px;width:1px;height:12.75px;background:#D6D2C4"></div>
<div class="b" style="left:615px;top:386.5px;width:1px;height:12.75px;background:#D6D2C4"></div>
<svg style="left:131px;top:389.1px" width="9" height="9"><use href="#cb"/></svg>
<div class="b" style="left:189px;top:386.5px;width:245px;height:12.75px;overflow:hidden">
<div class="t" style="left:0px;top:1.7px;font-size:7.5px;color:#000;text-shadow:.4px 0 0 rgba(0,0,0,0.35);transform:scaleX(0.9);">Turn down to an easygoing simmer.</div>
</div>
<svg style="left:436.3px;top:387.7px" width="10" height="10"><use href="#pN"/></svg>
<div class="t" style="left:449.5px;top:388.2px;font-size:7.5px;color:#000;text-shadow:.4px 0 0 rgba(0,0,0,0.35);transform:scaleX(0.9);">Normal</div>
<svg style="left:545.8px;top:388.3px" width="10" height="11"><use href="#doc"/></svg>
<div class="t" style="left:557px;top:388.6px;font-size:7.5px;color:#000;text-shadow:.4px 0 0 rgba(0,0,0,0.35);transform:scaleX(0.9);">Created</div>
<div class="t" style="left:595px;top:388.6px;font-size:7.5px;color:#000;text-shadow:.4px 0 0 rgba(0,0,0,0.35);transform:scaleX(0.9);">0 %</div>
<svg style="left:617.5px;top:388.5px" width="10" height="10"><use href="#pen"/></svg>
<div class="t" style="left:631px;top:388.2px;font-size:7.5px;color:#000;text-shadow:.4px 0 0 rgba(0,0,0,0.35);transform:scaleX(0.9);">7. Christmas D</div>
<div class="b" style="left:125.5px;top:400.25px;width:547px;height:13.75px;background:#fff;border-bottom:1px solid #D6D2C4"></div>
<div class="b" style="left:145px;top:400.25px;width:1px;height:12.75px;background:#D6D2C4"></div>
<div class="b" style="left:187px;top:400.25px;width:1px;height:12.75px;background:#D6D2C4"></div>
<div class="b" style="left:434px;top:400.25px;width:1px;height:12.75px;background:#D6D2C4"></div>
<div class="b" style="left:474px;top:400.25px;width:1px;height:12.75px;background:#D6D2C4"></div>
<div class="b" style="left:543px;top:400.25px;width:1px;height:12.75px;background:#D6D2C4"></div>
<div class="b" style="left:584px;top:400.25px;width:1px;height:12.75px;background:#D6D2C4"></div>
<div class="b" style="left:615px;top:400.25px;width:1px;height:12.75px;background:#D6D2C4"></div>
<svg style="left:131px;top:402.85px" width="9" height="9"><use href="#cb"/></svg>
<div class="b" style="left:189px;top:400.25px;width:245px;height:12.75px;overflow:hidden">
<div class="t" style="left:0px;top:1.7px;font-size:7.5px;color:#000;text-shadow:.4px 0 0 rgba(0,0,0,0.35);transform:scaleX(0.9);">Baste turkey again for luck.</div>
</div>
<svg style="left:436.3px;top:401.45px" width="10" height="10"><use href="#pN"/></svg>
<div class="t" style="left:449.5px;top:401.95px;font-size:7.5px;color:#000;text-shadow:.4px 0 0 rgba(0,0,0,0.35);transform:scaleX(0.9);">Normal</div>
<svg style="left:545.8px;top:402.05px" width="10" height="11"><use href="#doc"/></svg>
<div class="t" style="left:557px;top:402.35px;font-size:7.5px;color:#000;text-shadow:.4px 0 0 rgba(0,0,0,0.35);transform:scaleX(0.9);">Created</div>
<div class="t" style="left:595px;top:402.35px;font-size:7.5px;color:#000;text-shadow:.4px 0 0 rgba(0,0,0,0.35);transform:scaleX(0.9);">0 %</div>
<svg style="left:617.5px;top:402.25px" width="10" height="10"><use href="#pen"/></svg>
<div class="t" style="left:631px;top:401.95px;font-size:7.5px;color:#000;text-shadow:.4px 0 0 rgba(0,0,0,0.35);transform:scaleX(0.9);">7. Christmas D</div>
<div class="b" style="left:125.5px;top:414.0px;width:547px;height:13.75px;background:#fff;border-bottom:1px solid #D6D2C4"></div>
<div class="b" style="left:145px;top:414.0px;width:1px;height:12.75px;background:#D6D2C4"></div>
<div class="b" style="left:187px;top:414.0px;width:1px;height:12.75px;background:#D6D2C4"></div>
<div class="b" style="left:434px;top:414.0px;width:1px;height:12.75px;background:#D6D2C4"></div>
<div class="b" style="left:474px;top:414.0px;width:1px;height:12.75px;background:#D6D2C4"></div>
<div class="b" style="left:543px;top:414.0px;width:1px;height:12.75px;background:#D6D2C4"></div>
<div class="b" style="left:584px;top:414.0px;width:1px;height:12.75px;background:#D6D2C4"></div>
<div class="b" style="left:615px;top:414.0px;width:1px;height:12.75px;background:#D6D2C4"></div>
<svg style="left:131px;top:416.6px" width="9" height="9"><use href="#cb"/></svg>
<div class="b" style="left:189px;top:414.0px;width:245px;height:12.75px;overflow:hidden">
<div class="t" style="left:0px;top:1.7px;font-size:7.5px;color:#000;text-shadow:.4px 0 0 rgba(0,0,0,0.35);transform:scaleX(0.9);">Put pan of water on to boil for brussels sprouts.</div>
</div>
<svg style="left:436.3px;top:415.2px" width="10" height="10"><use href="#pH"/></svg>
<div class="t" style="left:449.5px;top:415.7px;font-size:7.5px;color:#000;text-shadow:.4px 0 0 rgba(0,0,0,0.35);transform:scaleX(0.9);">High</div>
<div class="t" style="left:477px;top:415.7px;font-size:7.5px;color:#000;text-shadow:.4px 0 0 rgba(0,0,0,0.35);transform:scaleX(0.9);">25.12.2005 12:00:00</div>
<svg style="left:545.8px;top:415.8px" width="10" height="11"><use href="#doc"/></svg>
<div class="t" style="left:557px;top:416.1px;font-size:7.5px;color:#000;text-shadow:.4px 0 0 rgba(0,0,0,0.35);transform:scaleX(0.9);">Created</div>
<div class="t" style="left:595px;top:416.1px;font-size:7.5px;color:#000;text-shadow:.4px 0 0 rgba(0,0,0,0.35);transform:scaleX(0.9);">0 %</div>
<svg style="left:617.5px;top:416.0px" width="10" height="10"><use href="#pen"/></svg>
<div class="t" style="left:631px;top:415.7px;font-size:7.5px;color:#000;text-shadow:.4px 0 0 rgba(0,0,0,0.35);transform:scaleX(0.9);">7. Christmas D</div>
<div class="b" style="left:125.5px;top:427.75px;width:547px;height:13.75px;background:#fff;border-bottom:1px solid #D6D2C4"></div>
<div class="b" style="left:145px;top:427.75px;width:1px;height:12.75px;background:#D6D2C4"></div>
<div class="b" style="left:187px;top:427.75px;width:1px;height:12.75px;background:#D6D2C4"></div>
<div class="b" style="left:434px;top:427.75px;width:1px;height:12.75px;background:#D6D2C4"></div>
<div class="b" style="left:474px;top:427.75px;width:1px;height:12.75px;background:#D6D2C4"></div>
<div class="b" style="left:543px;top:427.75px;width:1px;height:12.75px;background:#D6D2C4"></div>
<div class="b" style="left:584px;top:427.75px;width:1px;height:12.75px;background:#D6D2C4"></div>
<div class="b" style="left:615px;top:427.75px;width:1px;height:12.75px;background:#D6D2C4"></div>
<svg style="left:131px;top:430.35px" width="9" height="9"><use href="#cb"/></svg>
<div class="b" style="left:189px;top:427.75px;width:245px;height:12.75px;overflow:hidden">
<div class="t" style="left:0px;top:1.7px;font-size:7.5px;color:#000;text-shadow:.4px 0 0 rgba(0,0,0,0.35);transform:scaleX(0.9);">Parboil potatoes and parsnips, place in oven in roasting tin.</div>
</div>
<svg style="left:436.3px;top:428.95px" width="10" height="10"><use href="#pN"/></svg>
<div class="t" style="left:449.5px;top:429.45px;font-size:7.5px;color:#000;text-shadow:.4px 0 0 rgba(0,0,0,0.35);transform:scaleX(0.9);">Normal</div>
<div class="t" style="left:477px;top:429.45px;font-size:7.5px;color:#000;text-shadow:.4px 0 0 rgba(0,0,0,0.35);transform:scaleX(0.9);">25.12.2005 12:05:00</div>
<svg style="left:545.8px;top:429.55px" width="10" height="11"><use href="#doc"/></svg>
<div class="t" style="left:557px;top:429.85px;font-size:7.5px;color:#000;text-shadow:.4px 0 0 rgba(0,0,0,0.35);transform:scaleX(0.9);">Created</div>
<div class="t" style="left:595px;top:429.85px;font-size:7.5px;color:#000;text-shadow:.4px 0 0 rgba(0,0,0,0.35);transform:scaleX(0.9);">0 %</div>
<svg style="left:617.5px;top:429.75px" width="10" height="10"><use href="#pen"/></svg>
<div class="t" style="left:631px;top:429.45px;font-size:7.5px;color:#000;text-shadow:.4px 0 0 rgba(0,0,0,0.35);transform:scaleX(0.9);">7. Christmas D</div>
<div class="b" style="left:125.5px;top:441.5px;width:547px;height:13.75px;background:#fff;border-bottom:1px solid #D6D2C4"></div>
<div class="b" style="left:145px;top:441.5px;width:1px;height:12.75px;background:#D6D2C4"></div>
<div class="b" style="left:187px;top:441.5px;width:1px;height:12.75px;background:#D6D2C4"></div>
<div class="b" style="left:434px;top:441.5px;width:1px;height:12.75px;background:#D6D2C4"></div>
<div class="b" style="left:474px;top:441.5px;width:1px;height:12.75px;background:#D6D2C4"></div>
<div class="b" style="left:543px;top:441.5px;width:1px;height:12.75px;background:#D6D2C4"></div>
<div class="b" style="left:584px;top:441.5px;width:1px;height:12.75px;background:#D6D2C4"></div>
<div class="b" style="left:615px;top:441.5px;width:1px;height:12.75px;background:#D6D2C4"></div>
<svg style="left:131px;top:444.1px" width="9" height="9"><use href="#cb"/></svg>
<div class="b" style="left:189px;top:441.5px;width:245px;height:12.75px;overflow:hidden">
<div class="t" style="left:0px;top:1.7px;font-size:7.5px;color:#000;text-shadow:.4px 0 0 rgba(0,0,0,0.35);transform:scaleX(0.9);">Remove foil.</div>
</div>
<svg style="left:436.3px;top:442.7px" width="10" height="10"><use href="#pL"/></svg>
<div class="t" style="left:449.5px;top:443.2px;font-size:7.5px;color:#000;text-shadow:.4px 0 0 rgba(0,0,0,0.35);transform:scaleX(0.9);">Low</div>
<div class="t" style="left:477px;top:443.2px;font-size:7.5px;color:#000;text-shadow:.4px 0 0 rgba(0,0,0,0.35);transform:scaleX(0.9);">25.12.2005 12:45:00</div>
<svg style="left:545.8px;top:443.3px" width="10" height="11"><use href="#doc"/></svg>
<div class="t" style="left:557px;top:443.6px;font-size:7.5px;color:#000;text-shadow:.4px 0 0 rgba(0,0,0,0.35);transform:scaleX(0.9);">Created</div>
<div class="t" style="left:595px;top:443.6px;font-size:7.5px;color:#000;text-shadow:.4px 0 0 rgba(0,0,0,0.35);transform:scaleX(0.9);">0 %</div>
<svg style="left:617.5px;top:443.5px" width="10" height="10"><use href="#pen"/></svg>
<div class="t" style="left:631px;top:443.2px;font-size:7.5px;color:#000;text-shadow:.4px 0 0 rgba(0,0,0,0.35);transform:scaleX(0.9);">7. Christmas D</div>
<div class="b" style="left:125.5px;top:455.25px;width:547px;height:13.75px;background:#fff;border-bottom:1px solid #D6D2C4"></div>
<div class="b" style="left:145px;top:455.25px;width:1px;height:12.75px;background:#D6D2C4"></div>
<div class="b" style="left:187px;top:455.25px;width:1px;height:12.75px;background:#D6D2C4"></div>
<div class="b" style="left:434px;top:455.25px;width:1px;height:12.75px;background:#D6D2C4"></div>
<div class="b" style="left:474px;top:455.25px;width:1px;height:12.75px;background:#D6D2C4"></div>
<div class="b" style="left:543px;top:455.25px;width:1px;height:12.75px;background:#D6D2C4"></div>
<div class="b" style="left:584px;top:455.25px;width:1px;height:12.75px;background:#D6D2C4"></div>
<div class="b" style="left:615px;top:455.25px;width:1px;height:12.75px;background:#D6D2C4"></div>
<svg style="left:131px;top:457.85px" width="9" height="9"><use href="#cb"/></svg>
<div class="b" style="left:189px;top:455.25px;width:245px;height:12.75px;overflow:hidden">
<div class="t" style="left:0px;top:1.7px;font-size:7.5px;color:#000;text-shadow:.4px 0 0 rgba(0,0,0,0.35);transform:scaleX(0.9);">Splash slug of marsala/madeira/vermouth/white port/white wine over the turkey.</div>
</div>
<svg style="left:436.3px;top:456.45px" width="10" height="10"><use href="#pH"/></svg>
<div class="t" style="left:449.5px;top:456.95px;font-size:7.5px;color:#000;text-shadow:.4px 0 0 rgba(0,0,0,0.35);transform:scaleX(0.9);">High</div>
<svg style="left:545.8px;top:457.05px" width="10" height="11"><use href="#doc"/></svg>
<div class="t" style="left:557px;top:457.35px;font-size:7.5px;color:#000;text-shadow:.4px 0 0 rgba(0,0,0,0.35);transform:scaleX(0.9);">Created</div>
<div class="t" style="left:595px;top:457.35px;font-size:7.5px;color:#000;text-shadow:.4px 0 0 rgba(0,0,0,0.35);transform:scaleX(0.9);">0 %</div>
<svg style="left:617.5px;top:457.25px" width="10" height="10"><use href="#pen"/></svg>
<div class="t" style="left:631px;top:456.95px;font-size:7.5px;color:#000;text-shadow:.4px 0 0 rgba(0,0,0,0.35);transform:scaleX(0.9);">7. Christmas D</div>
<div class="b" style="left:125.5px;top:469.0px;width:547px;height:13.75px;background:#fff;border-bottom:1px solid #D6D2C4"></div>
<div class="b" style="left:145px;top:469.0px;width:1px;height:12.75px;background:#D6D2C4"></div>
<div class="b" style="left:187px;top:469.0px;width:1px;height:12.75px;background:#D6D2C4"></div>
<div class="b" style="left:434px;top:469.0px;width:1px;height:12.75px;background:#D6D2C4"></div>
<div class="b" style="left:474px;top:469.0px;width:1px;height:12.75px;background:#D6D2C4"></div>
<div class="b" style="left:543px;top:469.0px;width:1px;height:12.75px;background:#D6D2C4"></div>
<div class="b" style="left:584px;top:469.0px;width:1px;height:12.75px;background:#D6D2C4"></div>
<div class="b" style="left:615px;top:469.0px;width:1px;height:12.75px;background:#D6D2C4"></div>
<svg style="left:131px;top:471.6px" width="9" height="9"><use href="#cb"/></svg>
<div class="b" style="left:189px;top:469.0px;width:245px;height:12.75px;overflow:hidden">
<div class="t" style="left:0px;top:1.7px;font-size:7.5px;color:#000;text-shadow:.4px 0 0 rgba(0,0,0,0.35);transform:scaleX(0.9);">Make that a second slug.</div>
</div>
<svg style="left:436.3px;top:470.2px" width="10" height="10"><use href="#pN"/></svg>
<div class="t" style="left:449.5px;top:470.7px;font-size:7.5px;color:#000;text-shadow:.4px 0 0 rgba(0,0,0,0.35);transform:scaleX(0.9);">Normal</div>
<svg style="left:545.8px;top:470.8px" width="10" height="11"><use href="#doc"/></svg>
<div class="t" style="left:557px;top:471.1px;font-size:7.5px;color:#000;text-shadow:.4px 0 0 rgba(0,0,0,0.35);transform:scaleX(0.9);">Created</div>
<div class="t" style="left:595px;top:471.1px;font-size:7.5px;color:#000;text-shadow:.4px 0 0 rgba(0,0,0,0.35);transform:scaleX(0.9);">0 %</div>
<svg style="left:617.5px;top:471.0px" width="10" height="10"><use href="#pen"/></svg>
<div class="t" style="left:631px;top:470.7px;font-size:7.5px;color:#000;text-shadow:.4px 0 0 rgba(0,0,0,0.35);transform:scaleX(0.9);">7. Christmas D</div>
<div class="b" style="left:125.5px;top:482.75px;width:547px;height:13.75px;background:#fff;border-bottom:1px solid #D6D2C4"></div>
<div class="b" style="left:145px;top:482.75px;width:1px;height:12.75px;background:#D6D2C4"></div>
<div class="b" style="left:187px;top:482.75px;width:1px;height:12.75px;background:#D6D2C4"></div>
<div class="b" style="left:434px;top:482.75px;width:1px;height:12.75px;background:#D6D2C4"></div>
<div class="b" style="left:474px;top:482.75px;width:1px;height:12.75px;background:#D6D2C4"></div>
<div class="b" style="left:543px;top:482.75px;width:1px;height:12.75px;background:#D6D2C4"></div>
<div class="b" style="left:584px;top:482.75px;width:1px;height:12.75px;background:#D6D2C4"></div>
<div class="b" style="left:615px;top:482.75px;width:1px;height:12.75px;background:#D6D2C4"></div>
<svg style="left:131px;top:485.35px" width="9" height="9"><use href="#cb"/></svg>
<div class="b" style="left:189px;top:482.75px;width:245px;height:12.75px;overflow:hidden">
<div class="t" style="left:0px;top:1.7px;font-size:7.5px;color:#000;text-shadow:.4px 0 0 rgba(0,0,0,0.35);transform:scaleX(0.9);">Toss brussels sprouts into boiling water.</div>
</div>
<svg style="left:436.3px;top:483.95px" width="10" height="10"><use href="#pH"/></svg>
<div class="t" style="left:449.5px;top:484.45px;font-size:7.5px;color:#000;text-shadow:.4px 0 0 rgba(0,0,0,0.35);transform:scaleX(0.9);">High</div>
<svg style="left:545.8px;top:484.55px" width="10" height="11"><use href="#doc"/></svg>
<div class="t" style="left:557px;top:484.85px;font-size:7.5px;color:#000;text-shadow:.4px 0 0 rgba(0,0,0,0.35);transform:scaleX(0.9);">Created</div>
<div class="t" style="left:595px;top:484.85px;font-size:7.5px;color:#000;text-shadow:.4px 0 0 rgba(0,0,0,0.35);transform:scaleX(0.9);">0 %</div>
<svg style="left:617.5px;top:484.75px" width="10" height="10"><use href="#pen"/></svg>
<div class="t" style="left:631px;top:484.45px;font-size:7.5px;color:#000;text-shadow:.4px 0 0 rgba(0,0,0,0.35);transform:scaleX(0.9);">7. Christmas D</div>
<div class="b" style="left:125.5px;top:496.5px;width:547px;height:13.75px;background:#fff;border-bottom:1px solid #D6D2C4"></div>
<div class="b" style="left:145px;top:496.5px;width:1px;height:12.75px;background:#D6D2C4"></div>
<div class="b" style="left:187px;top:496.5px;width:1px;height:12.75px;background:#D6D2C4"></div>
<div class="b" style="left:434px;top:496.5px;width:1px;height:12.75px;background:#D6D2C4"></div>
<div class="b" style="left:474px;top:496.5px;width:1px;height:12.75px;background:#D6D2C4"></div>
<div class="b" style="left:543px;top:496.5px;width:1px;height:12.75px;background:#D6D2C4"></div>
<div class="b" style="left:584px;top:496.5px;width:1px;height:12.75px;background:#D6D2C4"></div>
<div class="b" style="left:615px;top:496.5px;width:1px;height:12.75px;background:#D6D2C4"></div>
<svg style="left:131px;top:499.1px" width="9" height="9"><use href="#cb"/></svg>
<div class="b" style="left:189px;top:496.5px;width:245px;height:12.75px;overflow:hidden">
<div class="t" style="left:0px;top:1.7px;font-size:7.5px;color:#000;text-shadow:.4px 0 0 rgba(0,0,0,0.35);transform:scaleX(0.9);">Take cheese out of cool storage to bring to room temperature.</div>
</div>
<svg style="left:436.3px;top:497.7px" width="10" height="10"><use href="#pN"/></svg>
<div class="t" style="left:449.5px;top:498.2px;font-size:7.5px;color:#000;text-shadow:.4px 0 0 rgba(0,0,0,0.35);transform:scaleX(0.9);">Normal</div>
<svg style="left:545.8px;top:498.3px" width="10" height="11"><use href="#doc"/></svg>
<div class="t" style="left:557px;top:498.6px;font-size:7.5px;color:#000;text-shadow:.4px 0 0 rgba(0,0,0,0.35);transform:scaleX(0.9);">Created</div>
<div class="t" style="left:595px;top:498.6px;font-size:7.5px;color:#000;text-shadow:.4px 0 0 rgba(0,0,0,0.35);transform:scaleX(0.9);">0 %</div>
<svg style="left:617.5px;top:498.5px" width="10" height="10"><use href="#pen"/></svg>
<div class="t" style="left:631px;top:498.2px;font-size:7.5px;color:#000;text-shadow:.4px 0 0 rgba(0,0,0,0.35);transform:scaleX(0.9);">7. Christmas D</div>
<div class="b" style="left:125.5px;top:510.25px;width:547px;height:13.75px;background:#fff;border-bottom:1px solid #D6D2C4"></div>
<div class="b" style="left:145px;top:510.25px;width:1px;height:12.75px;background:#D6D2C4"></div>
<div class="b" style="left:187px;top:510.25px;width:1px;height:12.75px;background:#D6D2C4"></div>
<div class="b" style="left:434px;top:510.25px;width:1px;height:12.75px;background:#D6D2C4"></div>
<div class="b" style="left:474px;top:510.25px;width:1px;height:12.75px;background:#D6D2C4"></div>
<div class="b" style="left:543px;top:510.25px;width:1px;height:12.75px;background:#D6D2C4"></div>
<div class="b" style="left:584px;top:510.25px;width:1px;height:12.75px;background:#D6D2C4"></div>
<div class="b" style="left:615px;top:510.25px;width:1px;height:12.75px;background:#D6D2C4"></div>
<svg style="left:131px;top:512.85px" width="9" height="9"><use href="#cb"/></svg>
<div class="b" style="left:189px;top:510.25px;width:245px;height:12.75px;overflow:hidden">
<div class="t" style="left:0px;top:1.7px;font-size:7.5px;color:#000;text-shadow:.4px 0 0 rgba(0,0,0,0.35);transform:scaleX(0.9);">Move turkey to a warm spot where it can relax and unwind.</div>
</div>
<svg style="left:436.3px;top:511.45px" width="10" height="10"><use href="#pN"/></svg>
<div class="t" style="left:449.5px;top:511.95px;font-size:7.5px;color:#000;text-shadow:.4px 0 0 rgba(0,0,0,0.35);transform:scaleX(0.9);">Normal</div>
<div class="t" style="left:477px;top:511.95px;font-size:7.5px;color:#000;text-shadow:.4px 0 0 rgba(0,0,0,0.35);transform:scaleX(0.9);">25.12.2005 13:00:00</div>
<svg style="left:545.8px;top:512.05px" width="10" height="11"><use href="#doc"/></svg>
<div class="t" style="left:557px;top:512.35px;font-size:7.5px;color:#000;text-shadow:.4px 0 0 rgba(0,0,0,0.35);transform:scaleX(0.9);">Created</div>
<div class="t" style="left:595px;top:512.35px;font-size:7.5px;color:#000;text-shadow:.4px 0 0 rgba(0,0,0,0.35);transform:scaleX(0.9);">0 %</div>
<svg style="left:617.5px;top:512.25px" width="10" height="10"><use href="#pen"/></svg>
<div class="t" style="left:631px;top:511.95px;font-size:7.5px;color:#000;text-shadow:.4px 0 0 rgba(0,0,0,0.35);transform:scaleX(0.9);">7. Christmas D</div>
<div class="b" style="left:125.5px;top:524.0px;width:547px;height:13.75px;background:#fff;border-bottom:1px solid #D6D2C4"></div>
<div class="b" style="left:145px;top:524.0px;width:1px;height:12.75px;background:#D6D2C4"></div>
<div class="b" style="left:187px;top:524.0px;width:1px;height:12.75px;background:#D6D2C4"></div>
<div class="b" style="left:434px;top:524.0px;width:1px;height:12.75px;background:#D6D2C4"></div>
<div class="b" style="left:474px;top:524.0px;width:1px;height:12.75px;background:#D6D2C4"></div>
<div class="b" style="left:543px;top:524.0px;width:1px;height:12.75px;background:#D6D2C4"></div>
<div class="b" style="left:584px;top:524.0px;width:1px;height:12.75px;background:#D6D2C4"></div>
<div class="b" style="left:615px;top:524.0px;width:1px;height:12.75px;background:#D6D2C4"></div>
<svg style="left:131px;top:526.6px" width="9" height="9"><use href="#cb"/></svg>
<div class="b" style="left:189px;top:524.0px;width:245px;height:12.75px;overflow:hidden">
<div class="t" style="left:0px;top:1.7px;font-size:7.5px;color:#000;text-shadow:.4px 0 0 rgba(0,0,0,0.35);transform:scaleX(0.9);">Turn oven up to 200C/400F/gas mark 8 to crisp potatoes, parsnips, anything else.</div>
</div>
<svg style="left:436.3px;top:525.2px" width="10" height="10"><use href="#pL"/></svg>
<div class="t" style="left:449.5px;top:525.7px;font-size:7.5px;color:#000;text-shadow:.4px 0 0 rgba(0,0,0,0.35);transform:scaleX(0.9);">Low</div>
<svg style="left:545.8px;top:525.8px" width="10" height="11"><use href="#doc"/></svg>
<div class="t" style="left:557px;top:526.1px;font-size:7.5px;color:#000;text-shadow:.4px 0 0 rgba(0,0,0,0.35);transform:scaleX(0.9);">Created</div>
<div class="t" style="left:595px;top:526.1px;font-size:7.5px;color:#000;text-shadow:.4px 0 0 rgba(0,0,0,0.35);transform:scaleX(0.9);">0 %</div>
<svg style="left:617.5px;top:526.0px" width="10" height="10"><use href="#pen"/></svg>
<div class="t" style="left:631px;top:525.7px;font-size:7.5px;color:#000;text-shadow:.4px 0 0 rgba(0,0,0,0.35);transform:scaleX(0.9);">7. Christmas D</div>
<div class="b" style="left:125.5px;top:537.75px;width:547px;height:13.75px;background:#fff;border-bottom:1px solid #D6D2C4"></div>
<div class="b" style="left:145px;top:537.75px;width:1px;height:12.75px;background:#D6D2C4"></div>
<div class="b" style="left:187px;top:537.75px;width:1px;height:12.75px;background:#D6D2C4"></div>
<div class="b" style="left:434px;top:537.75px;width:1px;height:12.75px;background:#D6D2C4"></div>
<div class="b" style="left:474px;top:537.75px;width:1px;height:12.75px;background:#D6D2C4"></div>
<div class="b" style="left:543px;top:537.75px;width:1px;height:12.75px;background:#D6D2C4"></div>
<div class="b" style="left:584px;top:537.75px;width:1px;height:12.75px;background:#D6D2C4"></div>
<div class="b" style="left:615px;top:537.75px;width:1px;height:12.75px;background:#D6D2C4"></div>
<svg style="left:131px;top:540.35px" width="9" height="9"><use href="#cb"/></svg>
<div class="b" style="left:189px;top:537.75px;width:245px;height:12.75px;overflow:hidden">
<div class="t" style="left:0px;top:1.7px;font-size:7.5px;color:#000;text-shadow:.4px 0 0 rgba(0,0,0,0.35);transform:scaleX(0.9);">Degrease roasting pan.</div>
</div>
<svg style="left:436.3px;top:538.95px" width="10" height="10"><use href="#pW"/></svg>
<div class="t" style="left:449.5px;top:539.45px;font-size:7.5px;color:#000;text-shadow:.4px 0 0 rgba(0,0,0,0.35);transform:scaleX(0.9);">Lowest</div>
<svg style="left:545.8px;top:539.55px" width="10" height="11"><use href="#doc"/></svg>
<div class="t" style="left:557px;top:539.85px;font-size:7.5px;color:#000;text-shadow:.4px 0 0 rgba(0,0,0,0.35);transform:scaleX(0.9);">Created</div>
<div class="t" style="left:595px;top:539.85px;font-size:7.5px;color:#000;text-shadow:.4px 0 0 rgba(0,0,0,0.35);transform:scaleX(0.9);">0 %</div>
<svg style="left:617.5px;top:539.75px" width="10" height="10"><use href="#pen"/></svg>
<div class="t" style="left:631px;top:539.45px;font-size:7.5px;color:#000;text-shadow:.4px 0 0 rgba(0,0,0,0.35);transform:scaleX(0.9);">7. Christmas D</div>
<div class="b" style="left:125.5px;top:551.5px;width:547px;height:13.75px;background:#fff;border-bottom:1px solid #D6D2C4"></div>
<div class="b" style="left:145px;top:551.5px;width:1px;height:12.75px;background:#D6D2C4"></div>
<div class="b" style="left:187px;top:551.5px;width:1px;height:12.75px;background:#D6D2C4"></div>
<div class="b" style="left:434px;top:551.5px;width:1px;height:12.75px;background:#D6D2C4"></div>
<div class="b" style="left:474px;top:551.5px;width:1px;height:12.75px;background:#D6D2C4"></div>
<div class="b" style="left:543px;top:551.5px;width:1px;height:12.75px;background:#D6D2C4"></div>
<div class="b" style="left:584px;top:551.5px;width:1px;height:12.75px;background:#D6D2C4"></div>
<div class="b" style="left:615px;top:551.5px;width:1px;height:12.75px;background:#D6D2C4"></div>
<svg style="left:131px;top:554.1px" width="9" height="9"><use href="#cb"/></svg>
<div class="b" style="left:189px;top:551.5px;width:245px;height:12.75px;overflow:hidden">
<div class="t" style="left:0px;top:1.7px;font-size:7.5px;color:#000;text-shadow:.4px 0 0 rgba(0,0,0,0.35);transform:scaleX(0.9);">Use remaining juices/gunk to make gravy.</div>
</div>
<svg style="left:436.3px;top:552.7px" width="10" height="10"><use href="#pN"/></svg>
<div class="t" style="left:449.5px;top:553.2px;font-size:7.5px;color:#000;text-shadow:.4px 0 0 rgba(0,0,0,0.35);transform:scaleX(0.9);">Normal</div>
<svg style="left:545.8px;top:553.3px" width="10" height="11"><use href="#doc"/></svg>
<div class="t" style="left:557px;top:553.6px;font-size:7.5px;color:#000;text-shadow:.4px 0 0 rgba(0,0,0,0.35);transform:scaleX(0.9);">Created</div>
<div class="t" style="left:595px;top:553.6px;font-size:7.5px;color:#000;text-shadow:.4px 0 0 rgba(0,0,0,0.35);transform:scaleX(0.9);">0 %</div>
<svg style="left:617.5px;top:553.5px" width="10" height="10"><use href="#pen"/></svg>
<div class="t" style="left:631px;top:553.2px;font-size:7.5px;color:#000;text-shadow:.4px 0 0 rgba(0,0,0,0.35);transform:scaleX(0.9);">7. Christmas D</div>
<div class="b" style="left:125.5px;top:565.25px;width:547px;height:13.75px;background:#fff;border-bottom:1px solid #D6D2C4"></div>
<div class="b" style="left:145px;top:565.25px;width:1px;height:12.75px;background:#D6D2C4"></div>
<div class="b" style="left:187px;top:565.25px;width:1px;height:12.75px;background:#D6D2C4"></div>
<div class="b" style="left:434px;top:565.25px;width:1px;height:12.75px;background:#D6D2C4"></div>
<div class="b" style="left:474px;top:565.25px;width:1px;height:12.75px;background:#D6D2C4"></div>
<div class="b" style="left:543px;top:565.25px;width:1px;height:12.75px;background:#D6D2C4"></div>
<div class="b" style="left:584px;top:565.25px;width:1px;height:12.75px;background:#D6D2C4"></div>
<div class="b" style="left:615px;top:565.25px;width:1px;height:12.75px;background:#D6D2C4"></div>
<svg style="left:131px;top:567.85px" width="9" height="9"><use href="#cb"/></svg>
<div class="b" style="left:189px;top:565.25px;width:245px;height:12.75px;overflow:hidden">
<div class="t" style="left:0px;top:1.7px;font-size:7.5px;color:#000;text-shadow:.4px 0 0 rgba(0,0,0,0.35);transform:scaleX(0.9);">Knock back stiff drink.</div>
</div>
<svg style="left:436.3px;top:566.45px" width="10" height="10"><use href="#pN"/></svg>
<div class="t" style="left:449.5px;top:566.95px;font-size:7.5px;color:#000;text-shadow:.4px 0 0 rgba(0,0,0,0.35);transform:scaleX(0.9);">Normal</div>
<div class="t" style="left:477px;top:566.95px;font-size:7.5px;color:#000;text-shadow:.4px 0 0 rgba(0,0,0,0.35);transform:scaleX(0.9);">25.12.2005 13:30:00</div>
<svg style="left:545.8px;top:567.05px" width="10" height="11"><use href="#doc"/></svg>
<div class="t" style="left:557px;top:567.35px;font-size:7.5px;color:#000;text-shadow:.4px 0 0 rgba(0,0,0,0.35);transform:scaleX(0.9);">Created</div>
<div class="t" style="left:595px;top:567.35px;font-size:7.5px;color:#000;text-shadow:.4px 0 0 rgba(0,0,0,0.35);transform:scaleX(0.9);">0 %</div>
<svg style="left:617.5px;top:567.25px" width="10" height="10"><use href="#pen"/></svg>
<div class="t" style="left:631px;top:566.95px;font-size:7.5px;color:#000;text-shadow:.4px 0 0 rgba(0,0,0,0.35);transform:scaleX(0.9);">7. Christmas D</div>
<div class="b" style="left:125.5px;top:579.0px;width:547px;height:13.75px;background:#fff;border-bottom:1px solid #D6D2C4"></div>
<div class="b" style="left:145px;top:579.0px;width:1px;height:12.75px;background:#D6D2C4"></div>
<div class="b" style="left:187px;top:579.0px;width:1px;height:12.75px;background:#D6D2C4"></div>
<div class="b" style="left:434px;top:579.0px;width:1px;height:12.75px;background:#D6D2C4"></div>
<div class="b" style="left:474px;top:579.0px;width:1px;height:12.75px;background:#D6D2C4"></div>
<div class="b" style="left:543px;top:579.0px;width:1px;height:12.75px;background:#D6D2C4"></div>
<div class="b" style="left:584px;top:579.0px;width:1px;height:12.75px;background:#D6D2C4"></div>
<div class="b" style="left:615px;top:579.0px;width:1px;height:12.75px;background:#D6D2C4"></div>
<svg style="left:131px;top:581.6px" width="9" height="9"><use href="#cb"/></svg>
<div class="b" style="left:189px;top:579.0px;width:245px;height:12.75px;overflow:hidden">
<div class="t" style="left:0px;top:1.7px;font-size:7.5px;color:#000;text-shadow:.4px 0 0 rgba(0,0,0,0.35);transform:scaleX(0.9);">Call troops to table. Brace yourself for, 'Why do we have to have turkey every Christ</div>
</div>
<svg style="left:436.3px;top:580.2px" width="10" height="10"><use href="#pN"/></svg>
<div class="t" style="left:449.5px;top:580.7px;font-size:7.5px;color:#000;text-shadow:.4px 0 0 rgba(0,0,0,0.35);transform:scaleX(0.9);">Normal</div>
<svg style="left:545.8px;top:580.8px" width="10" height="11"><use href="#doc"/></svg>
<div class="t" style="left:557px;top:581.1px;font-size:7.5px;color:#000;text-shadow:.4px 0 0 rgba(0,0,0,0.35);transform:scaleX(0.9);">Created</div>
<div class="t" style="left:595px;top:581.1px;font-size:7.5px;color:#000;text-shadow:.4px 0 0 rgba(0,0,0,0.35);transform:scaleX(0.9);">0 %</div>
<svg style="left:617.5px;top:581.0px" width="10" height="10"><use href="#pen"/></svg>
<div class="t" style="left:631px;top:580.7px;font-size:7.5px;color:#000;text-shadow:.4px 0 0 rgba(0,0,0,0.35);transform:scaleX(0.9);">7. Christmas D</div>
<svg style="left:175px;top:155.5px" width="11" height="11" viewBox="0 0 11 11"><path d="M3 5h5l.5 5H3z" fill="#F4F7FC" stroke="#B8C8E4" stroke-width=".5"/><path d="M1 9.5V4L2.8 1.5h3.5l4.5 4.8-6 1.8L2.8 4.5z" fill="#1E9A1E"/><path d="M3.2 2.2h3l3 3.2-3.5 1z" fill="#3CC03C"/></svg>
<div class="b" style="left:669px;top:99px;width:3.5px;height:493px;background:transparent"></div>
<div class="b" style="left:125px;top:99.5px;width:1px;height:493px;background:#CDC9BC"></div>
<div class="b" style="left:116.5px;top:592.5px;width:557px;height:16.5px;background:#ECE9D8;border-top:1px solid #D0CCBE;border-left:1px solid #FAFAF6"></div>
<div class="b" style="left:188px;top:595px;width:246px;height:12.5px;background:#F4F2EA;border-top:1px solid #A8A496;border-left:1px solid #C8C4B6"></div>
<div class="t" style="left:191px;top:597.8px;font-size:7.5px;color:#000;text-shadow:.4px 0 0 rgba(0,0,0,0.35);transform:scaleX(0.9);">116</div>
<div class="b" style="left:673px;top:55px;width:10.5px;height:554px;background:linear-gradient(90deg,#F3F3EE,#FDFDFB)"></div>
<div class="b" style="left:673.5px;top:55.5px;width:9.5px;height:9.5px;background:linear-gradient(#D6E2FB,#BCCEF5);border-radius:1px"></div>
<svg style="left:675.5px;top:58px" width="6" height="4" viewBox="0 0 6 4"><path d="M.5 3.5L3 1l2.5 2.5" stroke="#3D5280" stroke-width="1.2" fill="none"/></svg>
<div class="b" style="left:673.5px;top:598.5px;width:9.5px;height:10px;background:linear-gradient(#D6E2FB,#BCCEF5);border-radius:1px"></div>
<svg style="left:675.5px;top:602px" width="6" height="4" viewBox="0 0 6 4"><path d="M.5 .5L3 3l2.5-2.5" stroke="#3D5280" stroke-width="1.2" fill="none"/></svg>
<div class="b" style="left:673.5px;top:317px;width:9.5px;height:153px;background:linear-gradient(90deg,#C6D5FB,#BACCF8 70%,#C9D7FA);border-radius:1px;border:1px solid #D8E2FA"></div>
<div class="b" style="left:676px;top:390px;width:4px;height:1px;background:#DCE6FD;box-shadow:0 1px 0 #B0C2EC"></div>
<div class="b" style="left:676px;top:392px;width:4px;height:1px;background:#DCE6FD;box-shadow:0 1px 0 #B0C2EC"></div>
<div class="b" style="left:676px;top:394px;width:4px;height:1px;background:#DCE6FD;box-shadow:0 1px 0 #B0C2EC"></div>
<div class="b" style="left:676px;top:396px;width:4px;height:1px;background:#DCE6FD;box-shadow:0 1px 0 #B0C2EC"></div>
<div class="b" style="left:683px;top:55px;width:1px;height:554px;background:#9DAFD2"></div>
<div class="b" style="left:116px;top:609px;width:568px;height:18px;background:linear-gradient(#FDFDFB,#F1F0EA);border-top:1px solid #A9B6CE"></div>
<div class="b" style="left:118px;top:611px;width:47px;height:15.5px;background:#F8F8F4;border:1px solid #B4BDD0;border-bottom:0;border-radius:2px 2px 0 0"></div>
<div class="t" style="left:119px;top:614.5px;font-size:7.5px;color:#000;text-shadow:.4px 0 0 rgba(0,0,0,0.35);transform:scaleX(0.9);">Search result</div>
<div class="b" style="left:684px;top:54px;width:116px;height:574px;background:#ECE9D8"></div>
<div class="b" style="left:686px;top:55px;width:111.5px;height:14px;background:linear-gradient(#FDFDFB,#F4F3EE 60%,#ECEAE1);border:1px solid #D9D6C9;border-radius:3px"></div>
<div class="t" style="left:688px;top:59px;font-size:7.5px;color:#000;text-shadow:.4px 0 0 rgba(0,0,0,0.35);transform:scaleX(0.9);">Categories Bar</div>
<svg style="left:768px;top:57.5px" width="8" height="8" viewBox="0 0 8 8"><rect x=".5" y=".5" width="7" height="7" rx="1" fill="#2F6FE0" stroke="#1E56C0"/><rect x="2.2" y="2.8" width="3.6" height="2.6" fill="none" stroke="#fff" stroke-width=".8"/></svg>
<svg style="left:779.0px;top:57.5px" width="7" height="9" viewBox="0 0 7 9"><path d="M1 .8h5M1.8 .8v3.6h3.4V.8M.3 4.8h6.4M3.5 4.8V9" stroke="#2C5FBE" stroke-width="1" fill="none"/></svg>
<svg style="left:788.0px;top:57.5px" width="8.5" height="8.5" viewBox="0 0 8.5 8.5"><rect x=".5" y=".5" width="7.5" height="7.5" fill="#E66A30" stroke="#C8501C"/><path d="M2.3 2.3l3.9 3.9M6.2 2.3l-3.9 3.9" stroke="#fff" stroke-width="1.3"/></svg>
<div class="b" style="left:686px;top:69px;width:112.5px;height:144px;background:#fff;border:1px solid #7F9DB9"></div>
<div class="b" style="left:692.5px;top:70px;width:1px;height:95.5px;background:#C9C7BD"></div>
<div class="b" style="left:693px;top:76px;width:5.5px;height:1px;background:#C9C7BD"></div>
<svg style="left:699.5px;top:70.0px" width="11" height="11" viewBox="0 0 11 11"><circle cx="3" cy="3" r="2.3" fill="#E08A3A"/><path d="M0 10c0-3 1-5 3-5s3 2 3 5z" fill="#3A6ACA"/><circle cx="7.5" cy="3" r="2.3" fill="#5A3A2A"/><path d="M4.5 10c0-3 1-5 3-5s3 2 3 5z" fill="#2EA04A"/></svg>
<div class="t" style="left:712.5px;top:71.8px;font-size:7.5px;color:#000;text-shadow:.4px 0 0 rgba(0,0,0,0.35);transform:scaleX(0.915);">1. Two months beforehand</div>
<div class="b" style="left:693px;top:87px;width:5.5px;height:1px;background:#C9C7BD"></div>
<svg style="left:699.5px;top:81.22px" width="11" height="11" viewBox="0 0 11 11"><path d="M1 3c2-2 4-2 5 0 1-2 3-2 5 0v6c-2-1.5-4-1.5-5 0-1-1.5-3-1.5-5 0z" fill="#E8F0FA" stroke="#E08A3A" stroke-width=".9"/><path d="M6 3v6" stroke="#7A9AD0" stroke-width=".7"/></svg>
<div class="t" style="left:712.5px;top:83.02px;font-size:7.5px;color:#000;text-shadow:.4px 0 0 rgba(0,0,0,0.35);transform:scaleX(0.915);">2. One to two months befor</div>
<div class="b" style="left:693px;top:98px;width:5.5px;height:1px;background:#C9C7BD"></div>
<svg style="left:699.5px;top:92.44px" width="11" height="11" viewBox="0 0 11 11"><rect x="1" y="1" width="9" height="10" fill="#D8D0C0" stroke="#8A5A3A" stroke-width=".8"/><rect x="3" y="3" width="5" height="6" fill="#fff" stroke="#7A8AA8" stroke-width=".5"/><rect x="1" y="1" width="2" height="10" fill="#B85A2A"/></svg>
<div class="t" style="left:712.5px;top:94.24px;font-size:7.5px;color:#000;text-shadow:.4px 0 0 rgba(0,0,0,0.35);transform:scaleX(0.915);">3. Three weeks beforehand</div>
<div class="b" style="left:693px;top:109px;width:5.5px;height:1px;background:#C9C7BD"></div>
<svg style="left:699.5px;top:103.66px" width="11" height="11" viewBox="0 0 11 11"><ellipse cx="5.5" cy="6" rx="5" ry="4" fill="#E8A040" stroke="#B86A20" stroke-width=".6"/><circle cx="3" cy="5" r="1.1" fill="#2E62C8"/><circle cx="6" cy="4" r="1.1" fill="#D83A2A"/><circle cx="8" cy="6.5" r="1.1" fill="#3AAE3A"/><circle cx="4.5" cy="8" r="1" fill="#fff"/></svg>
<div class="t" style="left:712.5px;top:105.46px;font-size:7.5px;color:#000;text-shadow:.4px 0 0 rgba(0,0,0,0.35);transform:scaleX(0.915);">4. Two weeks beforehand</div>
<div class="b" style="left:693px;top:120px;width:5.5px;height:1px;background:#C9C7BD"></div>
<svg style="left:699.5px;top:114.88px" width="11" height="11" viewBox="0 0 11 11"><path d="M1.5 1v10" stroke="#2A4A8A" stroke-width="1.1"/><path d="M2 1.5h8v6H2z" fill="#3A6ACA"/><path d="M4 3h4v3H4z" fill="#8AB0F0"/></svg>
<div class="t" style="left:712.5px;top:116.67999999999999px;font-size:7.5px;color:#000;text-shadow:.4px 0 0 rgba(0,0,0,0.35);transform:scaleX(0.915);">5. One week beforehand</div>
<div class="b" style="left:693px;top:132px;width:5.5px;height:1px;background:#C9C7BD"></div>
<svg style="left:699.5px;top:126.1px" width="11" height="11" viewBox="0 0 11 11"><circle cx="7.5" cy="3.5" r="3" fill="#F0B040" stroke="#C08020" stroke-width=".7"/><circle cx="7.5" cy="3.5" r="1" fill="#fff"/><path d="M5.5 5.5L1 10l1.2 1.2 1-1 .8.8 1-1-.8-.8L6.7 6.7" fill="#F0B040" stroke="#C08020" stroke-width=".6"/></svg>
<div class="t" style="left:712.5px;top:127.89999999999999px;font-size:7.5px;color:#000;text-shadow:.4px 0 0 rgba(0,0,0,0.35);transform:scaleX(0.915);">6. Christmas Eve</div>
<div class="b" style="left:693px;top:143px;width:5.5px;height:1px;background:#C9C7BD"></div>
<svg style="left:699.5px;top:137.32px" width="11" height="11" viewBox="0 0 11 11"><path d="M.5 10.5L4 6.5l1.5 1.5zM4 6.5l5-5.5 1.2 1.2L5.5 8" fill="#2E62C8" stroke="#1D48A0" stroke-width=".5"/><path d="M6.5 3l3 2.5" stroke="#2E62C8" stroke-width="1"/></svg>
<div class="t" style="left:712.5px;top:139.12px;font-size:7.5px;color:#000;text-shadow:.4px 0 0 rgba(0,0,0,0.35);transform:scaleX(0.915);">7. Christmas Day</div>
<div class="b" style="left:693px;top:154px;width:5.5px;height:1px;background:#C9C7BD"></div>
<svg style="left:699.5px;top:148.54000000000002px" width="11" height="11" viewBox="0 0 11 11"><circle cx="5.5" cy="5.5" r="5" fill="#F8C820" stroke="#D89810" stroke-width=".6"/><circle cx="3.8" cy="4" r=".9" fill="#000"/><circle cx="7.2" cy="4" r=".9" fill="#000"/><path d="M2.5 6.5c1 2.5 5 2.5 6 0z" fill="#8A2A10"/></svg>
<div class="t" style="left:712.5px;top:150.34000000000003px;font-size:7.5px;color:#000;text-shadow:.4px 0 0 rgba(0,0,0,0.35);transform:scaleX(0.915);">8. Turkey Roasters' Notes</div>
<div class="b" style="left:693px;top:165px;width:5.5px;height:1px;background:#C9C7BD"></div>
<svg style="left:699.5px;top:159.76px" width="11" height="11" viewBox="0 0 11 11"><circle cx="5.5" cy="5.5" r="5" fill="#D8441A" stroke="#A02A0A" stroke-width=".6"/><circle cx="4" cy="4" r="1.5" fill="#F07A4A"/><circle cx="7" cy="6.5" r="1.2" fill="#A02A0A"/></svg>
<div class="t" style="left:712.5px;top:161.56px;font-size:7.5px;color:#000;text-shadow:.4px 0 0 rgba(0,0,0,0.35);transform:scaleX(0.915);">9. Warning</div>
<div class="b" style="left:686px;top:213px;width:112.5px;height:2.5px;background:#ECE9D8"></div>
<div class="b" style="left:686px;top:216px;width:111.5px;height:13px;background:linear-gradient(#FDFDFB,#F4F3EE 60%,#ECEAE1);border:1px solid #D9D6C9;border-radius:3px"></div>
<div class="t" style="left:688px;top:219px;font-size:7.5px;color:#000;text-shadow:.4px 0 0 rgba(0,0,0,0.35);transform:scaleX(0.9);">Filters Bar</div>
<svg style="left:768px;top:218.5px" width="8" height="8" viewBox="0 0 8 8"><rect x=".5" y=".5" width="7" height="7" rx="1" fill="#2F6FE0" stroke="#1E56C0"/><rect x="2.2" y="2.8" width="3.6" height="2.6" fill="none" stroke="#fff" stroke-width=".8"/></svg>
<svg style="left:779.0px;top:218.5px" width="7" height="9" viewBox="0 0 7 9"><path d="M1 .8h5M1.8 .8v3.6h3.4V.8M.3 4.8h6.4M3.5 4.8V9" stroke="#2C5FBE" stroke-width="1" fill="none"/></svg>
<svg style="left:788.0px;top:218.5px" width="8.5" height="8.5" viewBox="0 0 8.5 8.5"><rect x=".5" y=".5" width="7.5" height="7.5" fill="#E66A30" stroke="#C8501C"/><path d="M2.3 2.3l3.9 3.9M6.2 2.3l-3.9 3.9" stroke="#fff" stroke-width="1.3"/></svg>
<div class="t" style="left:691px;top:235px;font-size:7.8px;color:#000;font-weight:bold;text-shadow:.3px 0 0 rgba(0,0,0,0.27999999999999997);transform:scaleX(0.9);">Filter By Done:</div>
<div class="b" style="left:690px;top:245.5px;width:76.5px;height:13px;background:#fff;border:1px solid #8FA6C4"></div>
<div class="t" style="left:693px;top:249px;font-size:7.5px;color:#000;text-shadow:.4px 0 0 rgba(0,0,0,0.35);transform:scaleX(0.9);">All</div>
<div class="b" style="left:756px;top:247px;width:9px;height:10px;background:linear-gradient(#D4E0FA,#B4C8F2);border-radius:1px"></div>
<svg style="left:758px;top:250.5px" width="5" height="3" viewBox="0 0 5 3"><path d="M.5 .5L2.5 2.5 4.5 .5" stroke="#4D6185" stroke-width="1.1" fill="none"/></svg>
<div class="t" style="left:691px;top:265.3px;font-size:7.8px;color:#000;font-weight:bold;text-shadow:.3px 0 0 rgba(0,0,0,0.27999999999999997);transform:scaleX(0.9);">Filter By Due Date:</div>
<svg style="left:693px;top:280px" width="3" height="5" viewBox="0 0 3 5"><path d="M3 0V5L0 2.5z" fill="#000"/></svg>
<svg style="left:776px;top:280px" width="3" height="5" viewBox="0 0 3 5"><path d="M0 0V5L3 2.5z" fill="#000"/></svg>
<div class="t" style="left:715px;top:279.5px;font-size:7.5px;color:#000;text-shadow:.4px 0 0 rgba(0,0,0,0.35);transform:scaleX(0.9);">Ноябрь 2005</div>
<div class="b" style="left:689px;top:287.5px;width:93px;height:1px;background:#5A5A50"></div>
<div class="t" style="left:700.5px;top:291px;font-size:7.5px;color:#000;text-shadow:.4px 0 0 rgba(0,0,0,0.35);transform:scaleX(0.9);">П</div>
<div class="t" style="left:711.85px;top:291px;font-size:7.5px;color:#000;text-shadow:.4px 0 0 rgba(0,0,0,0.35);transform:scaleX(0.9);">В</div>
<div class="t" style="left:723.2px;top:291px;font-size:7.5px;color:#000;text-shadow:.4px 0 0 rgba(0,0,0,0.35);transform:scaleX(0.9);">С</div>
<div class="t" style="left:734.55px;top:291px;font-size:7.5px;color:#000;text-shadow:.4px 0 0 rgba(0,0,0,0.35);transform:scaleX(0.9);">Ч</div>
<div class="t" style="left:745.9px;top:291px;font-size:7.5px;color:#000;text-shadow:.4px 0 0 rgba(0,0,0,0.35);transform:scaleX(0.9);">П</div>
<div class="t" style="left:757.25px;top:291px;font-size:7.5px;color:#000;text-shadow:.4px 0 0 rgba(0,0,0,0.35);transform:scaleX(0.9);">С</div>
<div class="t" style="left:768.6px;top:291px;font-size:7.5px;color:#000;text-shadow:.4px 0 0 rgba(0,0,0,0.35);transform:scaleX(0.9);">В</div>
<div class="b" style="left:696px;top:298px;width:79px;height:1px;background:#C8C4B4"></div>
<div class="b" style="left:730px;top:298.8px;width:11.5px;height:10.5px;background:#316AC5;border:1px solid #C0603A"></div>
<div class="t" style="left:697.8px;top:300.7px;font-size:7.5px;color:#A8A69C;text-shadow:.4px 0 0 rgba(168,166,156,0.35);transform:scaleX(0.9);">31</div>
<div class="t" style="left:712.6999999999999px;top:300.7px;font-size:7.5px;color:#000;text-shadow:.4px 0 0 rgba(0,0,0,0.35);transform:scaleX(0.9);">1</div>
<div class="t" style="left:724.0px;top:300.7px;font-size:7.5px;color:#000;text-shadow:.4px 0 0 rgba(0,0,0,0.35);transform:scaleX(0.9);">2</div>
<div class="t" style="left:735.3px;top:300.7px;font-size:7.5px;color:#fff;text-shadow:.4px 0 0 rgba(255,255,255,0.35);transform:scaleX(0.9);">3</div>
<div class="t" style="left:746.6px;top:300.7px;font-size:7.5px;color:#000;text-shadow:.4px 0 0 rgba(0,0,0,0.35);transform:scaleX(0.9);">4</div>
<div class="t" style="left:757.9px;top:300.7px;font-size:7.5px;color:#000;text-shadow:.4px 0 0 rgba(0,0,0,0.35);transform:scaleX(0.9);">5</div>
<div class="t" style="left:769.1999999999999px;top:300.7px;font-size:7.5px;color:#000;text-shadow:.4px 0 0 rgba(0,0,0,0.35);transform:scaleX(0.9);">6</div>
<div class="t" style="left:701.4px;top:310.0px;font-size:7.5px;color:#000;text-shadow:.4px 0 0 rgba(0,0,0,0.35);transform:scaleX(0.9);">7</div>
<div class="t" style="left:712.6999999999999px;top:310.0px;font-size:7.5px;color:#000;text-shadow:.4px 0 0 rgba(0,0,0,0.35);transform:scaleX(0.9);">8</div>
<div class="t" style="left:724.0px;top:310.0px;font-size:7.5px;color:#000;text-shadow:.4px 0 0 rgba(0,0,0,0.35);transform:scaleX(0.9);">9</div>
<div class="t" style="left:731.6999999999999px;top:310.0px;font-size:7.5px;color:#000;text-shadow:.4px 0 0 rgba(0,0,0,0.35);transform:scaleX(0.9);">10</div>
<div class="t" style="left:743.0px;top:310.0px;font-size:7.5px;color:#000;text-shadow:.4px 0 0 rgba(0,0,0,0.35);transform:scaleX(0.9);">11</div>
<div class="t" style="left:754.3px;top:310.0px;font-size:7.5px;color:#000;text-shadow:.4px 0 0 rgba(0,0,0,0.35);transform:scaleX(0.9);">12</div>
<div class="t" style="left:765.5999999999999px;top:310.0px;font-size:7.5px;color:#000;text-shadow:.4px 0 0 rgba(0,0,0,0.35);transform:scaleX(0.9);">13</div>
<div class="t" style="left:697.8px;top:319.3px;font-size:7.5px;color:#000;text-shadow:.4px 0 0 rgba(0,0,0,0.35);transform:scaleX(0.9);">14</div>
<div class="t" style="left:709.0999999999999px;top:319.3px;font-size:7.5px;color:#000;text-shadow:.4px 0 0 rgba(0,0,0,0.35);transform:scaleX(0.9);">15</div>
<div class="t" style="left:720.4px;top:319.3px;font-size:7.5px;color:#000;text-shadow:.4px 0 0 rgba(0,0,0,0.35);transform:scaleX(0.9);">16</div>
<div class="t" style="left:731.6999999999999px;top:319.3px;font-size:7.5px;color:#000;text-shadow:.4px 0 0 rgba(0,0,0,0.35);transform:scaleX(0.9);">17</div>
<div class="t" style="left:743.0px;top:319.3px;font-size:7.5px;color:#000;text-shadow:.4px 0 0 rgba(0,0,0,0.35);transform:scaleX(0.9);">18</div>
<div class="t" style="left:754.3px;top:319.3px;font-size:7.5px;color:#000;text-shadow:.4px 0 0 rgba(0,0,0,0.35);transform:scaleX(0.9);">19</div>
<div class="t" style="left:765.5999999999999px;top:319.3px;font-size:7.5px;color:#000;text-shadow:.4px 0 0 rgba(0,0,0,0.35);transform:scaleX(0.9);">20</div>
<div class="t" style="left:697.8px;top:328.59999999999997px;font-size:7.5px;color:#000;text-shadow:.4px 0 0 rgba(0,0,0,0.35);transform:scaleX(0.9);">21</div>
<div class="t" style="left:709.0999999999999px;top:328.59999999999997px;font-size:7.5px;color:#000;text-shadow:.4px 0 0 rgba(0,0,0,0.35);transform:scaleX(0.9);">22</div>
<div class="t" style="left:720.4px;top:328.59999999999997px;font-size:7.5px;color:#000;text-shadow:.4px 0 0 rgba(0,0,0,0.35);transform:scaleX(0.9);">23</div>
<div class="t" style="left:731.6999999999999px;top:328.59999999999997px;font-size:7.5px;color:#000;text-shadow:.4px 0 0 rgba(0,0,0,0.35);transform:scaleX(0.9);">24</div>
<div class="t" style="left:743.0px;top:328.59999999999997px;font-size:7.5px;color:#000;text-shadow:.4px 0 0 rgba(0,0,0,0.35);transform:scaleX(0.9);">25</div>
<div class="t" style="left:754.3px;top:328.59999999999997px;font-size:7.5px;color:#000;text-shadow:.4px 0 0 rgba(0,0,0,0.35);transform:scaleX(0.9);">26</div>
<div class="t" style="left:765.5999999999999px;top:328.59999999999997px;font-size:7.5px;color:#000;text-shadow:.4px 0 0 rgba(0,0,0,0.35);transform:scaleX(0.9);">27</div>
<div class="t" style="left:697.8px;top:337.9px;font-size:7.5px;color:#000;text-shadow:.4px 0 0 rgba(0,0,0,0.35);transform:scaleX(0.9);">28</div>
<div class="t" style="left:709.0999999999999px;top:337.9px;font-size:7.5px;color:#000;text-shadow:.4px 0 0 rgba(0,0,0,0.35);transform:scaleX(0.9);">29</div>
<div class="t" style="left:720.4px;top:337.9px;font-size:7.5px;color:#000;text-shadow:.4px 0 0 rgba(0,0,0,0.35);transform:scaleX(0.9);">30</div>
<div class="t" style="left:735.3px;top:337.9px;font-size:7.5px;color:#A8A69C;text-shadow:.4px 0 0 rgba(168,166,156,0.35);transform:scaleX(0.9);">1</div>
<div class="t" style="left:746.6px;top:337.9px;font-size:7.5px;color:#A8A69C;text-shadow:.4px 0 0 rgba(168,166,156,0.35);transform:scaleX(0.9);">2</div>
<div class="t" style="left:757.9px;top:337.9px;font-size:7.5px;color:#A8A69C;text-shadow:.4px 0 0 rgba(168,166,156,0.35);transform:scaleX(0.9);">3</div>
<div class="t" style="left:769.1999999999999px;top:337.9px;font-size:7.5px;color:#A8A69C;text-shadow:.4px 0 0 rgba(168,166,156,0.35);transform:scaleX(0.9);">4</div>
<div class="t" style="left:701.4px;top:347.2px;font-size:7.5px;color:#A8A69C;text-shadow:.4px 0 0 rgba(168,166,156,0.35);transform:scaleX(0.9);">5</div>
<div class="t" style="left:712.6999999999999px;top:347.2px;font-size:7.5px;color:#A8A69C;text-shadow:.4px 0 0 rgba(168,166,156,0.35);transform:scaleX(0.9);">6</div>
<div class="t" style="left:724.0px;top:347.2px;font-size:7.5px;color:#A8A69C;text-shadow:.4px 0 0 rgba(168,166,156,0.35);transform:scaleX(0.9);">7</div>
<div class="t" style="left:735.3px;top:347.2px;font-size:7.5px;color:#A8A69C;text-shadow:.4px 0 0 rgba(168,166,156,0.35);transform:scaleX(0.9);">8</div>
<div class="t" style="left:746.6px;top:347.2px;font-size:7.5px;color:#A8A69C;text-shadow:.4px 0 0 rgba(168,166,156,0.35);transform:scaleX(0.9);">9</div>
<div class="t" style="left:754.3px;top:347.2px;font-size:7.5px;color:#A8A69C;text-shadow:.4px 0 0 rgba(168,166,156,0.35);transform:scaleX(0.9);">10</div>
<div class="t" style="left:765.5999999999999px;top:347.2px;font-size:7.5px;color:#A8A69C;text-shadow:.4px 0 0 rgba(168,166,156,0.35);transform:scaleX(0.9);">11</div>
<div class="b" style="left:696px;top:355px;width:79px;height:1px;background:#C8C4B4"></div>
<div class="b" style="left:700px;top:359px;width:30px;height:12.5px;background:linear-gradient(#FFFFFF,#F0EFE8);border:1px solid #3C5FA8;border-radius:2px;box-shadow:inset 0 0 0 1px #C2D4F2"></div>
<div class="t" style="left:704px;top:361.5px;font-size:8.5px;color:#ACA899;font-weight:bold;text-shadow:.3px 0 0 rgba(172,168,153,0.27999999999999997);transform:scaleX(0.92);">Today</div>
<div class="b" style="left:742px;top:359px;width:30px;height:12.5px;background:linear-gradient(#FFFFFF,#F0EFE8);border:1px solid #3C5FA8;border-radius:2px;box-shadow:inset 0 0 0 1px #C2D4F2"></div>
<div class="t" style="left:746px;top:361.5px;font-size:8.5px;color:#ACA899;font-weight:bold;text-shadow:.3px 0 0 rgba(172,168,153,0.27999999999999997);transform:scaleX(0.92);">Clear</div>
<div class="b" style="left:690px;top:380.5px;width:91.5px;height:13px;background:#fff;border:1px solid #8FA6C4"></div>
<div class="t" style="left:692.5px;top:384px;font-size:7.5px;color:#000;text-shadow:.4px 0 0 rgba(0,0,0,0.35);transform:scaleX(0.9);">is less than or equal to</div>
<div class="b" style="left:771px;top:382px;width:9px;height:10px;background:linear-gradient(#D4E0FA,#B4C8F2);border-radius:1px"></div>
<svg style="left:773px;top:385.5px" width="5" height="3" viewBox="0 0 5 3"><path d="M.5 .5L2.5 2.5 4.5 .5" stroke="#4D6185" stroke-width="1.1" fill="none"/></svg>
<div class="b" style="left:0px;top:627px;width:800px;height:1px;background:#A9A699"></div>
<div class="b" style="left:0px;top:628px;width:800px;height:10.5px;background:#ECE9D8"></div>
<div class="b" style="left:0px;top:638.5px;width:800px;height:1.5px;background:#2F63D8"></div></div></body></html>
